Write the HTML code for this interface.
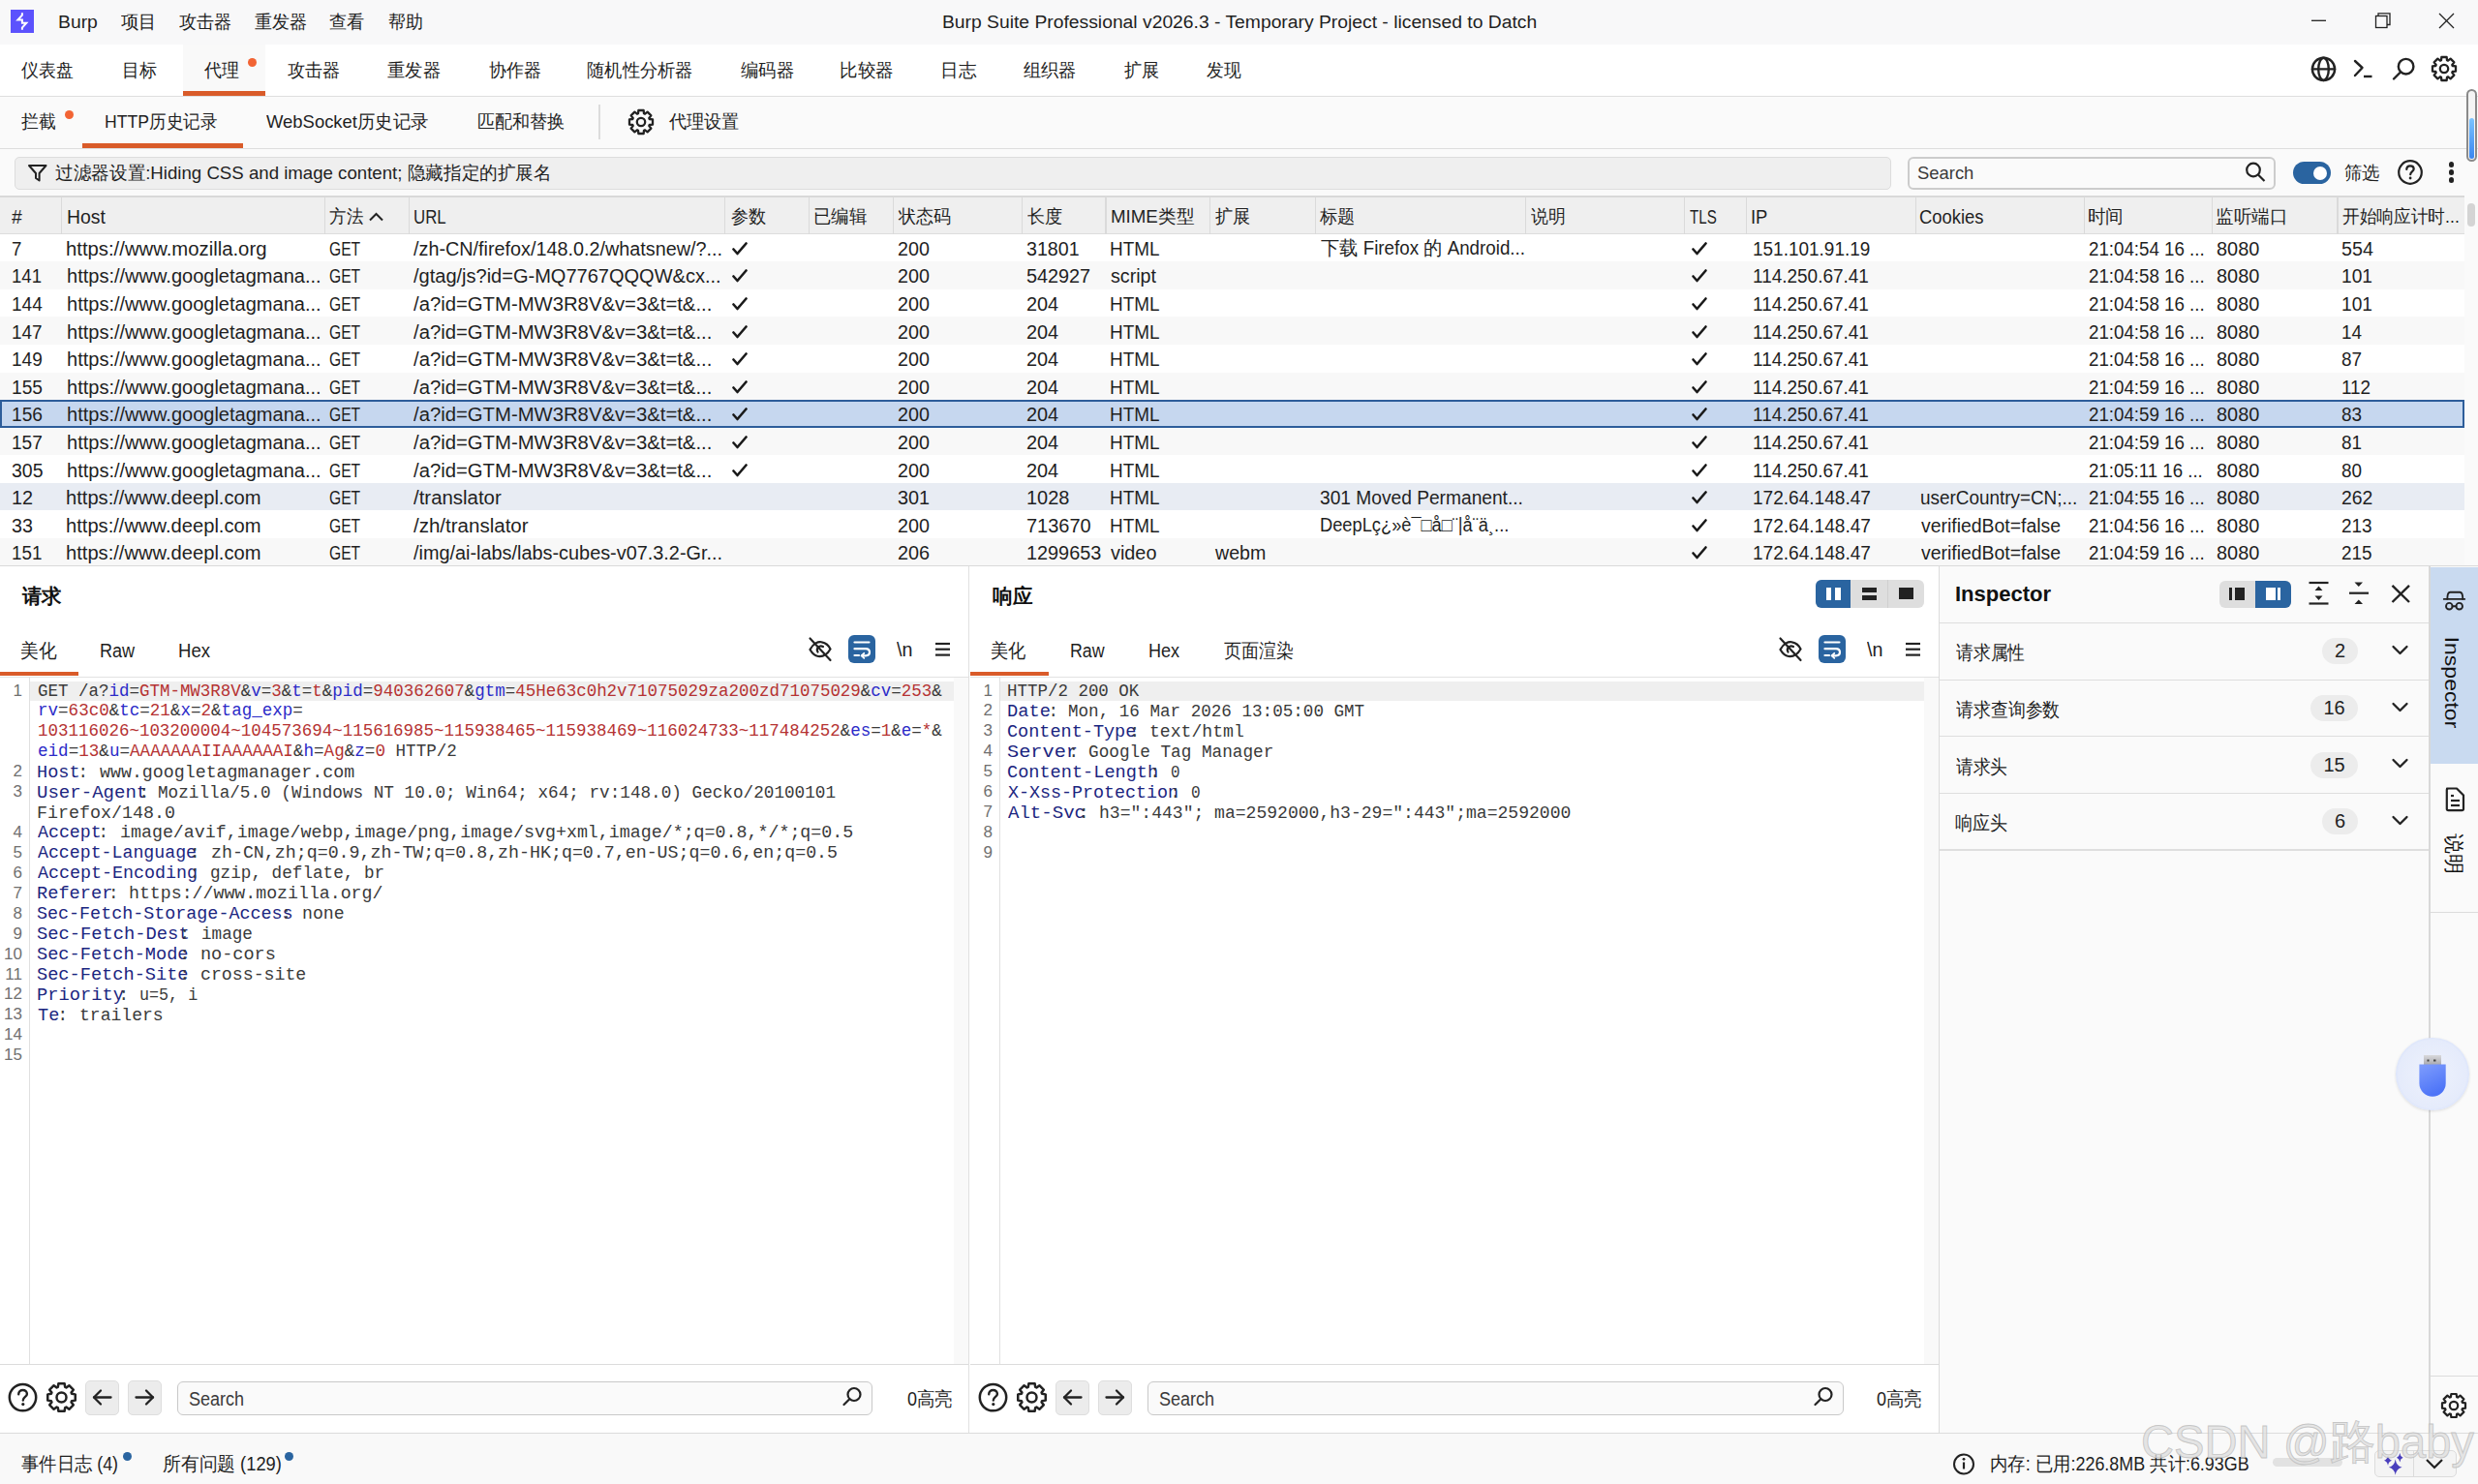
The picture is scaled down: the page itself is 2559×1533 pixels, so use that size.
<!DOCTYPE html>
<html><head><meta charset="utf-8"><style>
html,body{margin:0;padding:0;}
body{width:2559px;height:1533px;position:relative;overflow:hidden;background:#ffffff;font-family:'Liberation Sans',sans-serif;}
</style></head><body>
<div style="position:absolute;left:0px;top:0px;width:2559px;height:46px;background:#f8f8f9"></div>
<svg style="position:absolute;left:11px;top:10px;" width="24" height="24" viewBox="0 0 24 24"><rect width="24" height="24" fill="#5c52fd"/><polyline points="11.9,3.2 11.9,5.6 7.4,10.6 11.9,10.6 11.9,13.7 16.3,13.7 11.9,18.6 11.9,20.7" fill="none" stroke="#fff" stroke-width="2" stroke-linejoin="miter"/></svg>
<div style="position:absolute;left:59.58px;top:8.00px;height:30px;line-height:30px;font-size:19px;color:#1f1f1f;font-weight:normal;font-family:'Liberation Sans',sans-serif;white-space:pre;transform-origin:0 50%;transform:scaleX(1.0179);">Burp</div>
<div style="position:absolute;left:124.50px;top:8.00px;height:30px;line-height:30px;font-size:19px;color:#1f1f1f;font-weight:normal;font-family:'Liberation Sans',sans-serif;white-space:pre;transform-origin:0 50%;transform:scaleX(0.9686);">项目</div>
<div style="position:absolute;left:184.60px;top:8.00px;height:30px;line-height:30px;font-size:19px;color:#1f1f1f;font-weight:normal;font-family:'Liberation Sans',sans-serif;white-space:pre;transform-origin:0 50%;transform:scaleX(0.9518);">攻击器</div>
<div style="position:absolute;left:262.50px;top:8.00px;height:30px;line-height:30px;font-size:19px;color:#1f1f1f;font-weight:normal;font-family:'Liberation Sans',sans-serif;white-space:pre;transform-origin:0 50%;transform:scaleX(0.9500);">重发器</div>
<div style="position:absolute;left:340.30px;top:8.00px;height:30px;line-height:30px;font-size:19px;color:#1f1f1f;font-weight:normal;font-family:'Liberation Sans',sans-serif;white-space:pre;transform-origin:0 50%;transform:scaleX(0.9595);">查看</div>
<div style="position:absolute;left:400.60px;top:8.00px;height:30px;line-height:30px;font-size:19px;color:#1f1f1f;font-weight:normal;font-family:'Liberation Sans',sans-serif;white-space:pre;transform-origin:0 50%;transform:scaleX(0.9432);">帮助</div>
<div style="position:absolute;left:972.59px;top:8.00px;height:30px;line-height:30px;font-size:19.2px;color:#1f1f1f;font-weight:normal;font-family:'Liberation Sans',sans-serif;white-space:pre;transform-origin:0 50%;transform:scaleX(1.0056);">Burp Suite Professional v2026.3 - Temporary Project - licensed to Datch</div>
<svg style="position:absolute;left:2380px;top:5px;" width="170" height="36" viewBox="0 0 170 36"><g stroke="#222" stroke-width="1.3" fill="none"><line x1="7" y1="16.3" x2="22" y2="16.3"/><rect x="73.5" y="11.5" width="11.5" height="12"/><path d="M76 11.5 V8.8 H88 V20.5 H85"/><line x1="139" y1="9" x2="154" y2="24"/><line x1="154" y1="9" x2="139" y2="24"/></g></svg>
<div style="position:absolute;left:0px;top:46px;width:2559px;height:53px;background:#ffffff"></div>
<div style="position:absolute;left:0px;top:99px;width:2559px;height:1px;background:#dedede"></div>
<div style="position:absolute;left:188.5px;top:46px;width:85.2px;height:53px;background:#f9f9f9"></div>
<div style="position:absolute;left:188.5px;top:94px;width:85.2px;height:4.5px;background:#d95b29"></div>
<div style="position:absolute;left:256px;top:59.5px;width:9px;height:9px;border-radius:50%;background:#f26434"></div>
<div style="position:absolute;left:22.30px;top:57.50px;height:30px;line-height:30px;font-size:19px;color:#1f1f1f;font-weight:normal;font-family:'Liberation Sans',sans-serif;white-space:pre;transform-origin:0 50%;transform:scaleX(0.9404);">仪表盘</div>
<div style="position:absolute;left:125.60px;top:57.50px;height:30px;line-height:30px;font-size:19px;color:#1f1f1f;font-weight:normal;font-family:'Liberation Sans',sans-serif;white-space:pre;transform-origin:0 50%;transform:scaleX(0.9500);">目标</div>
<div style="position:absolute;left:211.10px;top:57.50px;height:30px;line-height:30px;font-size:19px;color:#1f1f1f;font-weight:normal;font-family:'Liberation Sans',sans-serif;white-space:pre;transform-origin:0 50%;transform:scaleX(0.9447);">代理</div>
<div style="position:absolute;left:297.30px;top:57.50px;height:30px;line-height:30px;font-size:19px;color:#1f1f1f;font-weight:normal;font-family:'Liberation Sans',sans-serif;white-space:pre;transform-origin:0 50%;transform:scaleX(0.9518);">攻击器</div>
<div style="position:absolute;left:400.00px;top:57.50px;height:30px;line-height:30px;font-size:19px;color:#1f1f1f;font-weight:normal;font-family:'Liberation Sans',sans-serif;white-space:pre;transform-origin:0 50%;transform:scaleX(0.9625);">重发器</div>
<div style="position:absolute;left:504.80px;top:57.50px;height:30px;line-height:30px;font-size:19px;color:#1f1f1f;font-weight:normal;font-family:'Liberation Sans',sans-serif;white-space:pre;transform-origin:0 50%;transform:scaleX(0.9464);">协作器</div>
<div style="position:absolute;left:606.44px;top:57.50px;height:30px;line-height:30px;font-size:19px;color:#1f1f1f;font-weight:normal;font-family:'Liberation Sans',sans-serif;white-space:pre;transform-origin:0 50%;transform:scaleX(0.9607);">随机性分析器</div>
<div style="position:absolute;left:765.20px;top:57.50px;height:30px;line-height:30px;font-size:19px;color:#1f1f1f;font-weight:normal;font-family:'Liberation Sans',sans-serif;white-space:pre;transform-origin:0 50%;transform:scaleX(0.9643);">编码器</div>
<div style="position:absolute;left:867.23px;top:57.50px;height:30px;line-height:30px;font-size:19px;color:#1f1f1f;font-weight:normal;font-family:'Liberation Sans',sans-serif;white-space:pre;transform-origin:0 50%;transform:scaleX(0.9745);">比较器</div>
<div style="position:absolute;left:970.78px;top:57.50px;height:30px;line-height:30px;font-size:19px;color:#1f1f1f;font-weight:normal;font-family:'Liberation Sans',sans-serif;white-space:pre;transform-origin:0 50%;transform:scaleX(0.9743);">日志</div>
<div style="position:absolute;left:1057.40px;top:57.50px;height:30px;line-height:30px;font-size:19px;color:#1f1f1f;font-weight:normal;font-family:'Liberation Sans',sans-serif;white-space:pre;transform-origin:0 50%;transform:scaleX(0.9571);">组织器</div>
<div style="position:absolute;left:1161.00px;top:57.50px;height:30px;line-height:30px;font-size:19px;color:#1f1f1f;font-weight:normal;font-family:'Liberation Sans',sans-serif;white-space:pre;transform-origin:0 50%;transform:scaleX(0.9568);">扩展</div>
<div style="position:absolute;left:1246.00px;top:57.50px;height:30px;line-height:30px;font-size:19px;color:#1f1f1f;font-weight:normal;font-family:'Liberation Sans',sans-serif;white-space:pre;transform-origin:0 50%;transform:scaleX(0.9342);">发现</div>
<svg style="position:absolute;left:2380px;top:52px;" width="160" height="40" viewBox="0 0 160 40"><g stroke="#222" stroke-width="2.4" fill="none" stroke-linecap="round"><circle cx="19.5" cy="19.4" r="11.6"/><ellipse cx="19.5" cy="19.4" rx="5.3" ry="11.6"/><line x1="8" y1="19.4" x2="31" y2="19.4"/><polyline points="52,11 59.5,18 52,26" stroke-linecap="round" stroke-linejoin="round"/><line x1="61" y1="27" x2="69.5" y2="27" stroke-linecap="butt"/><circle cx="104.6" cy="16.7" r="7.8"/><line x1="99" y1="22.5" x2="92" y2="29.5"/></g></svg>
<svg style="position:absolute;left:2508.7px;top:56.4px;" width="30" height="30" viewBox="0 0 30 30"><path d="M23.69,11.99 L27.01,12.36 L27.01,17.64 L23.69,18.01 L23.28,19.01 L25.36,21.63 L21.63,25.36 L19.01,23.28 L18.01,23.69 L17.64,27.01 L12.36,27.01 L11.99,23.69 L10.99,23.28 L8.37,25.36 L4.64,21.63 L6.72,19.01 L6.31,18.01 L2.99,17.64 L2.99,12.36 L6.31,11.99 L6.72,10.99 L4.64,8.37 L8.37,4.64 L10.99,6.72 L11.99,6.31 L12.36,2.99 L17.64,2.99 L18.01,6.31 L19.01,6.72 L21.63,4.64 L25.36,8.37 L23.28,10.99Z" fill="none" stroke="#222" stroke-width="2.3" stroke-linejoin="round"/><circle cx="15.0" cy="15.0" r="4.2" fill="none" stroke="#222" stroke-width="2.3"/></svg>
<div style="position:absolute;left:0px;top:100px;width:2559px;height:53px;background:#fafafa"></div>
<div style="position:absolute;left:0px;top:153px;width:2559px;height:1px;background:#dedede"></div>
<div style="position:absolute;left:85px;top:148px;width:166px;height:4.5px;background:#d95b29"></div>
<div style="position:absolute;left:67px;top:113.5px;width:9px;height:9px;border-radius:50%;background:#f26434"></div>
<div style="position:absolute;left:22.30px;top:111.00px;height:30px;line-height:30px;font-size:19px;color:#1f1f1f;font-weight:normal;font-family:'Liberation Sans',sans-serif;white-space:pre;transform-origin:0 50%;transform:scaleX(0.9316);">拦截</div>
<div style="position:absolute;left:108.07px;top:111.00px;height:30px;line-height:30px;font-size:19px;color:#1f1f1f;font-weight:normal;font-family:'Liberation Sans',sans-serif;white-space:pre;transform-origin:0 50%;transform:scaleX(0.9256);">HTTP历史记录</div>
<div style="position:absolute;left:274.70px;top:111.00px;height:30px;line-height:30px;font-size:19px;color:#1f1f1f;font-weight:normal;font-family:'Liberation Sans',sans-serif;white-space:pre;transform-origin:0 50%;transform:scaleX(0.9705);">WebSocket历史记录</div>
<div style="position:absolute;left:493.05px;top:111.00px;height:30px;line-height:30px;font-size:19px;color:#1f1f1f;font-weight:normal;font-family:'Liberation Sans',sans-serif;white-space:pre;transform-origin:0 50%;transform:scaleX(0.9538);">匹配和替换</div>
<div style="position:absolute;left:690.90px;top:111.00px;height:30px;line-height:30px;font-size:19px;color:#1f1f1f;font-weight:normal;font-family:'Liberation Sans',sans-serif;white-space:pre;transform-origin:0 50%;transform:scaleX(0.9547);">代理设置</div>
<div style="position:absolute;left:618px;top:108px;width:1.5px;height:36px;background:#dcdcdc"></div>
<svg style="position:absolute;left:647.0px;top:111.0px;" width="30" height="30" viewBox="0 0 30 30"><path d="M23.69,11.99 L27.01,12.36 L27.01,17.64 L23.69,18.01 L23.28,19.01 L25.36,21.63 L21.63,25.36 L19.01,23.28 L18.01,23.69 L17.64,27.01 L12.36,27.01 L11.99,23.69 L10.99,23.28 L8.37,25.36 L4.64,21.63 L6.72,19.01 L6.31,18.01 L2.99,17.64 L2.99,12.36 L6.31,11.99 L6.72,10.99 L4.64,8.37 L8.37,4.64 L10.99,6.72 L11.99,6.31 L12.36,2.99 L17.64,2.99 L18.01,6.31 L19.01,6.72 L21.63,4.64 L25.36,8.37 L23.28,10.99Z" fill="none" stroke="#222" stroke-width="2.3" stroke-linejoin="round"/><circle cx="15.0" cy="15.0" r="4.2" fill="none" stroke="#222" stroke-width="2.3"/></svg>
<div style="position:absolute;left:0px;top:154px;width:2559px;height:49px;background:#fafafa"></div>
<div style="position:absolute;left:14.5px;top:161.5px;width:1938.7px;height:34px;box-sizing:border-box;border:1.3px solid #dcdcdc;border-radius:5px;background:#efefef"></div>
<svg style="position:absolute;left:28px;top:169px;" width="22" height="19" viewBox="0 0 22 19"><path d="M2 2 H19.5 L12.6 10 V17.5 L9 15 V10 Z" fill="none" stroke="#222" stroke-width="2" stroke-linejoin="round"/></svg>
<div style="position:absolute;left:56.80px;top:163.50px;height:30px;line-height:30px;font-size:19px;color:#1f1f1f;font-weight:normal;font-family:'Liberation Sans',sans-serif;white-space:pre;transform-origin:0 50%;transform:scaleX(0.9810);">过滤器设置:Hiding CSS and image content; 隐藏指定的扩展名</div>
<div style="position:absolute;left:1969.5px;top:161.5px;width:380px;height:34px;box-sizing:border-box;border:2px solid #cccccc;border-radius:6px;background:#fafafa"></div>
<div style="position:absolute;left:1980.43px;top:163.50px;height:30px;line-height:30px;font-size:19px;color:#3a3a3a;font-weight:normal;font-family:'Liberation Sans',sans-serif;white-space:pre;transform-origin:0 50%;transform:scaleX(0.9690);">Search</div>
<svg style="position:absolute;left:2316px;top:164px;" width="28" height="30" viewBox="0 0 28 30"><g stroke="#222" stroke-width="2.2" fill="none"><circle cx="11" cy="11.5" r="6.8"/><line x1="16" y1="16.5" x2="22.5" y2="23"/></g></svg>
<div style="position:absolute;left:2368px;top:167px;width:39px;height:23px;border-radius:12px;background:#2a64a0"></div>
<div style="position:absolute;left:2389px;top:171.5px;width:14px;height:14px;border-radius:50%;background:#fff"></div>
<div style="position:absolute;left:2421.04px;top:163.50px;height:30px;line-height:30px;font-size:19px;color:#1f1f1f;font-weight:normal;font-family:'Liberation Sans',sans-serif;white-space:pre;transform-origin:0 50%;transform:scaleX(0.9649);">筛选</div>
<svg style="position:absolute;left:2475px;top:164px;" width="28" height="28" viewBox="0 0 28 28"><circle cx="14" cy="14" r="11.8" fill="none" stroke="#222" stroke-width="2.2"/><path d="M10.3 11 C10.3 8.5 12 7.3 14 7.3 C16.2 7.3 17.7 8.7 17.7 10.6 C17.7 13 14.2 13.3 14.2 16.2" fill="none" stroke="#222" stroke-width="2.2" stroke-linecap="round"/><circle cx="14.1" cy="20" r="1.4" fill="#222"/></svg>
<div style="position:absolute;left:2529px;top:167.4px;width:5.2px;height:5.2px;border-radius:50%;background:#222"></div>
<div style="position:absolute;left:2529px;top:175.4px;width:5.2px;height:5.2px;border-radius:50%;background:#222"></div>
<div style="position:absolute;left:2529px;top:183.4px;width:5.2px;height:5.2px;border-radius:50%;background:#222"></div>
<div style="position:absolute;left:2547px;top:92px;width:11px;height:75px;box-sizing:border-box;border:2px solid #8a8a8a;border-radius:6px;background:#f4f4f4"></div>
<div style="position:absolute;left:2550px;top:122px;width:5px;height:42px;border-radius:3px;background:linear-gradient(#7cc4ff,#3a86f0)"></div>
<div style="position:absolute;left:0px;top:203.4px;width:2545px;height:38.19999999999999px;background:#efefef"></div>
<div style="position:absolute;left:0px;top:202.4px;width:2545px;height:1.3px;background:#d9d9d9"></div>
<div style="position:absolute;left:0px;top:240.6px;width:2545px;height:1.2px;background:#dddddd"></div>
<div style="position:absolute;left:63.3px;top:203.4px;width:1.2px;height:38.19999999999999px;background:#dadada"></div>
<div style="position:absolute;left:334.5px;top:203.4px;width:1.2px;height:38.19999999999999px;background:#dadada"></div>
<div style="position:absolute;left:421.5px;top:203.4px;width:1.2px;height:38.19999999999999px;background:#dadada"></div>
<div style="position:absolute;left:748.3px;top:203.4px;width:1.2px;height:38.19999999999999px;background:#dadada"></div>
<div style="position:absolute;left:835.3px;top:203.4px;width:1.2px;height:38.19999999999999px;background:#dadada"></div>
<div style="position:absolute;left:922.3px;top:203.4px;width:1.2px;height:38.19999999999999px;background:#dadada"></div>
<div style="position:absolute;left:1054.5px;top:203.4px;width:1.2px;height:38.19999999999999px;background:#dadada"></div>
<div style="position:absolute;left:1141.4px;top:203.4px;width:1.2px;height:38.19999999999999px;background:#dadada"></div>
<div style="position:absolute;left:1249.2px;top:203.4px;width:1.2px;height:38.19999999999999px;background:#dadada"></div>
<div style="position:absolute;left:1357.8px;top:203.4px;width:1.2px;height:38.19999999999999px;background:#dadada"></div>
<div style="position:absolute;left:1575.1px;top:203.4px;width:1.2px;height:38.19999999999999px;background:#dadada"></div>
<div style="position:absolute;left:1738.6px;top:203.4px;width:1.2px;height:38.19999999999999px;background:#dadada"></div>
<div style="position:absolute;left:1803.2px;top:203.4px;width:1.2px;height:38.19999999999999px;background:#dadada"></div>
<div style="position:absolute;left:1977.5px;top:203.4px;width:1.2px;height:38.19999999999999px;background:#dadada"></div>
<div style="position:absolute;left:2151.6px;top:203.4px;width:1.2px;height:38.19999999999999px;background:#dadada"></div>
<div style="position:absolute;left:2283.8px;top:203.4px;width:1.2px;height:38.19999999999999px;background:#dadada"></div>
<div style="position:absolute;left:2413.4px;top:203.4px;width:1.2px;height:38.19999999999999px;background:#dadada"></div>
<div style="position:absolute;left:12.10px;top:208.00px;height:32px;line-height:32px;font-size:20px;color:#1f1f1f;font-weight:normal;font-family:'Liberation Sans',sans-serif;white-space:pre;transform-origin:0 50%;transform:scaleX(0.9636);">#</div>
<div style="position:absolute;left:68.73px;top:208.00px;height:32px;line-height:32px;font-size:20px;color:#1f1f1f;font-weight:normal;font-family:'Liberation Sans',sans-serif;white-space:pre;transform-origin:0 50%;transform:scaleX(0.9700);">Host</div>
<div style="position:absolute;left:340.00px;top:209.00px;height:30px;line-height:30px;font-size:19px;color:#1f1f1f;font-weight:normal;font-family:'Liberation Sans',sans-serif;white-space:pre;transform-origin:0 50%;transform:scaleX(0.9211);">方法</div>
<div style="position:absolute;left:426.56px;top:208.00px;height:32px;line-height:32px;font-size:20px;color:#1f1f1f;font-weight:normal;font-family:'Liberation Sans',sans-serif;white-space:pre;transform-origin:0 50%;transform:scaleX(0.8410);">URL</div>
<div style="position:absolute;left:754.50px;top:209.00px;height:30px;line-height:30px;font-size:19px;color:#1f1f1f;font-weight:normal;font-family:'Liberation Sans',sans-serif;white-space:pre;transform-origin:0 50%;transform:scaleX(0.9541);">参数</div>
<div style="position:absolute;left:839.56px;top:209.00px;height:30px;line-height:30px;font-size:19px;color:#1f1f1f;font-weight:normal;font-family:'Liberation Sans',sans-serif;white-space:pre;transform-origin:0 50%;transform:scaleX(0.9709);">已编辑</div>
<div style="position:absolute;left:928.20px;top:209.00px;height:30px;line-height:30px;font-size:19px;color:#1f1f1f;font-weight:normal;font-family:'Liberation Sans',sans-serif;white-space:pre;transform-origin:0 50%;transform:scaleX(0.9500);">状态码</div>
<div style="position:absolute;left:1060.60px;top:209.00px;height:30px;line-height:30px;font-size:19px;color:#1f1f1f;font-weight:normal;font-family:'Liberation Sans',sans-serif;white-space:pre;transform-origin:0 50%;transform:scaleX(0.9568);">长度</div>
<div style="position:absolute;left:1146.52px;top:209.00px;height:30px;line-height:30px;font-size:19px;color:#1f1f1f;font-weight:normal;font-family:'Liberation Sans',sans-serif;white-space:pre;transform-origin:0 50%;transform:scaleX(0.9839);">MIME类型</div>
<div style="position:absolute;left:1255.20px;top:209.00px;height:30px;line-height:30px;font-size:19px;color:#1f1f1f;font-weight:normal;font-family:'Liberation Sans',sans-serif;white-space:pre;transform-origin:0 50%;transform:scaleX(0.9568);">扩展</div>
<div style="position:absolute;left:1363.30px;top:209.00px;height:30px;line-height:30px;font-size:19px;color:#1f1f1f;font-weight:normal;font-family:'Liberation Sans',sans-serif;white-space:pre;transform-origin:0 50%;transform:scaleX(0.9568);">标题</div>
<div style="position:absolute;left:1581.20px;top:209.00px;height:30px;line-height:30px;font-size:19px;color:#1f1f1f;font-weight:normal;font-family:'Liberation Sans',sans-serif;white-space:pre;transform-origin:0 50%;transform:scaleX(0.9405);">说明</div>
<div style="position:absolute;left:1744.60px;top:208.00px;height:32px;line-height:32px;font-size:20px;color:#1f1f1f;font-weight:normal;font-family:'Liberation Sans',sans-serif;white-space:pre;transform-origin:0 50%;transform:scaleX(0.7556);">TLS</div>
<div style="position:absolute;left:1807.86px;top:208.00px;height:32px;line-height:32px;font-size:20px;color:#1f1f1f;font-weight:normal;font-family:'Liberation Sans',sans-serif;white-space:pre;transform-origin:0 50%;transform:scaleX(0.9188);">IP</div>
<div style="position:absolute;left:1982.48px;top:208.00px;height:32px;line-height:32px;font-size:20px;color:#1f1f1f;font-weight:normal;font-family:'Liberation Sans',sans-serif;white-space:pre;transform-origin:0 50%;transform:scaleX(0.9197);">Cookies</div>
<div style="position:absolute;left:2156.43px;top:209.00px;height:30px;line-height:30px;font-size:19px;color:#1f1f1f;font-weight:normal;font-family:'Liberation Sans',sans-serif;white-space:pre;transform-origin:0 50%;transform:scaleX(0.9722);">时间</div>
<div style="position:absolute;left:2288.32px;top:209.00px;height:30px;line-height:30px;font-size:19px;color:#1f1f1f;font-weight:normal;font-family:'Liberation Sans',sans-serif;white-space:pre;transform-origin:0 50%;transform:scaleX(0.9806);">监听端口</div>
<div style="position:absolute;left:2419.30px;top:209.00px;height:30px;line-height:30px;font-size:19px;color:#1f1f1f;font-weight:normal;font-family:'Liberation Sans',sans-serif;white-space:pre;transform-origin:0 50%;transform:scaleX(0.9305);">开始响应计时...</div>
<svg style="position:absolute;left:380px;top:218px;" width="18" height="12" viewBox="0 0 18 12"><polyline points="2,9.5 8.5,3 15,9.5" fill="none" stroke="#222" stroke-width="2"/></svg>
<div style="position:absolute;left:0px;top:241.6px;width:2545px;height:29.08px;background:#ffffff"></div>
<div style="position:absolute;left:11.77px;top:240.89px;height:32px;line-height:32px;font-size:20px;color:#1f1f1f;font-weight:normal;font-family:'Liberation Sans',sans-serif;white-space:pre;transform-origin:0 50%;transform:scaleX(0.9300);">7</div>
<div style="position:absolute;left:68.49px;top:240.89px;height:32px;line-height:32px;font-size:20px;color:#1f1f1f;font-weight:normal;font-family:'Liberation Sans',sans-serif;white-space:pre;transform-origin:0 50%;transform:scaleX(1.0143);">https://www.mozilla.org</div>
<div style="position:absolute;left:339.92px;top:240.89px;height:32px;line-height:32px;font-size:20px;color:#1f1f1f;font-weight:normal;font-family:'Liberation Sans',sans-serif;white-space:pre;transform-origin:0 50%;transform:scaleX(0.7825);">GET</div>
<div style="position:absolute;left:427.00px;top:240.89px;height:32px;line-height:32px;font-size:20px;color:#1f1f1f;font-weight:normal;font-family:'Liberation Sans',sans-serif;white-space:pre;transform-origin:0 50%;transform:scaleX(0.9894);">/zh-CN/firefox/148.0.2/whatsnew/?...</div>
<svg style="position:absolute;left:755.3px;top:248.89px;" width="20" height="16" viewBox="0 0 20 16"><polyline points="2.5,8.5 6.5,13 15.5,2.5" fill="none" stroke="#1a1a1a" stroke-width="2.6" stroke-linecap="round" stroke-linejoin="round"/></svg>
<div style="position:absolute;left:927.32px;top:240.89px;height:32px;line-height:32px;font-size:20px;color:#1f1f1f;font-weight:normal;font-family:'Liberation Sans',sans-serif;white-space:pre;transform-origin:0 50%;transform:scaleX(0.9844);">200</div>
<div style="position:absolute;left:1059.52px;top:240.89px;height:32px;line-height:32px;font-size:20px;color:#1f1f1f;font-weight:normal;font-family:'Liberation Sans',sans-serif;white-space:pre;transform-origin:0 50%;transform:scaleX(0.9815);">31801</div>
<div style="position:absolute;left:1146.45px;top:240.89px;height:32px;line-height:32px;font-size:20px;color:#1f1f1f;font-weight:normal;font-family:'Liberation Sans',sans-serif;white-space:pre;transform-origin:0 50%;transform:scaleX(0.9472);">HTML</div>
<div style="position:absolute;left:1363.80px;top:241.39px;height:31px;line-height:31px;font-size:19.5px;color:#1f1f1f;font-weight:normal;font-family:'Liberation Sans',sans-serif;white-space:pre;transform-origin:0 50%;transform:scaleX(0.9619);">下载 Firefox 的 Android...</div>
<svg style="position:absolute;left:1745.6px;top:248.89px;" width="20" height="16" viewBox="0 0 20 16"><polyline points="2.5,8.5 6.5,13 15.5,2.5" fill="none" stroke="#1a1a1a" stroke-width="2.6" stroke-linecap="round" stroke-linejoin="round"/></svg>
<div style="position:absolute;left:1809.75px;top:240.89px;height:32px;line-height:32px;font-size:20px;color:#1f1f1f;font-weight:normal;font-family:'Liberation Sans',sans-serif;white-space:pre;transform-origin:0 50%;transform:scaleX(0.9484);">151.101.91.19</div>
<div style="position:absolute;left:2156.66px;top:240.89px;height:32px;line-height:32px;font-size:20px;color:#1f1f1f;font-weight:normal;font-family:'Liberation Sans',sans-serif;white-space:pre;transform-origin:0 50%;transform:scaleX(0.9360);">21:04:54 16 ...</div>
<div style="position:absolute;left:2288.80px;top:240.89px;height:32px;line-height:32px;font-size:20px;color:#1f1f1f;font-weight:normal;font-family:'Liberation Sans',sans-serif;white-space:pre;transform-origin:0 50%;transform:scaleX(0.9953);">8080</div>
<div style="position:absolute;left:2418.42px;top:240.89px;height:32px;line-height:32px;font-size:20px;color:#1f1f1f;font-weight:normal;font-family:'Liberation Sans',sans-serif;white-space:pre;transform-origin:0 50%;transform:scaleX(0.9844);">554</div>
<div style="position:absolute;left:0px;top:270.18px;width:2545px;height:29.08px;background:#f8f8f8"></div>
<div style="position:absolute;left:11.77px;top:269.47px;height:32px;line-height:32px;font-size:20px;color:#1f1f1f;font-weight:normal;font-family:'Liberation Sans',sans-serif;white-space:pre;transform-origin:0 50%;transform:scaleX(0.9281);">141</div>
<div style="position:absolute;left:68.50px;top:269.47px;height:32px;line-height:32px;font-size:20px;color:#1f1f1f;font-weight:normal;font-family:'Liberation Sans',sans-serif;white-space:pre;transform-origin:0 50%;transform:scaleX(1.0008);">https://www.googletagmana...</div>
<div style="position:absolute;left:339.92px;top:269.47px;height:32px;line-height:32px;font-size:20px;color:#1f1f1f;font-weight:normal;font-family:'Liberation Sans',sans-serif;white-space:pre;transform-origin:0 50%;transform:scaleX(0.7825);">GET</div>
<div style="position:absolute;left:427.00px;top:269.47px;height:32px;line-height:32px;font-size:20px;color:#1f1f1f;font-weight:normal;font-family:'Liberation Sans',sans-serif;white-space:pre;transform-origin:0 50%;transform:scaleX(1.0009);">/gtag/js?id=G-MQ7767QQQW&amp;cx...</div>
<svg style="position:absolute;left:755.3px;top:277.47px;" width="20" height="16" viewBox="0 0 20 16"><polyline points="2.5,8.5 6.5,13 15.5,2.5" fill="none" stroke="#1a1a1a" stroke-width="2.6" stroke-linecap="round" stroke-linejoin="round"/></svg>
<div style="position:absolute;left:927.32px;top:269.47px;height:32px;line-height:32px;font-size:20px;color:#1f1f1f;font-weight:normal;font-family:'Liberation Sans',sans-serif;white-space:pre;transform-origin:0 50%;transform:scaleX(0.9844);">200</div>
<div style="position:absolute;left:1059.51px;top:269.47px;height:32px;line-height:32px;font-size:20px;color:#1f1f1f;font-weight:normal;font-family:'Liberation Sans',sans-serif;white-space:pre;transform-origin:0 50%;transform:scaleX(0.9908);">542927</div>
<div style="position:absolute;left:1147.40px;top:269.47px;height:32px;line-height:32px;font-size:20px;color:#1f1f1f;font-weight:normal;font-family:'Liberation Sans',sans-serif;white-space:pre;transform-origin:0 50%;transform:scaleX(0.9833);">script</div>
<svg style="position:absolute;left:1745.6px;top:277.47px;" width="20" height="16" viewBox="0 0 20 16"><polyline points="2.5,8.5 6.5,13 15.5,2.5" fill="none" stroke="#1a1a1a" stroke-width="2.6" stroke-linecap="round" stroke-linejoin="round"/></svg>
<div style="position:absolute;left:1809.75px;top:269.47px;height:32px;line-height:32px;font-size:20px;color:#1f1f1f;font-weight:normal;font-family:'Liberation Sans',sans-serif;white-space:pre;transform-origin:0 50%;transform:scaleX(0.9480);">114.250.67.41</div>
<div style="position:absolute;left:2156.66px;top:269.47px;height:32px;line-height:32px;font-size:20px;color:#1f1f1f;font-weight:normal;font-family:'Liberation Sans',sans-serif;white-space:pre;transform-origin:0 50%;transform:scaleX(0.9360);">21:04:58 16 ...</div>
<div style="position:absolute;left:2288.80px;top:269.47px;height:32px;line-height:32px;font-size:20px;color:#1f1f1f;font-weight:normal;font-family:'Liberation Sans',sans-serif;white-space:pre;transform-origin:0 50%;transform:scaleX(0.9953);">8080</div>
<div style="position:absolute;left:2418.44px;top:269.47px;height:32px;line-height:32px;font-size:20px;color:#1f1f1f;font-weight:normal;font-family:'Liberation Sans',sans-serif;white-space:pre;transform-origin:0 50%;transform:scaleX(0.9594);">101</div>
<div style="position:absolute;left:0px;top:298.76px;width:2545px;height:29.08px;background:#ffffff"></div>
<div style="position:absolute;left:11.75px;top:298.05px;height:32px;line-height:32px;font-size:20px;color:#1f1f1f;font-weight:normal;font-family:'Liberation Sans',sans-serif;white-space:pre;transform-origin:0 50%;transform:scaleX(0.9531);">144</div>
<div style="position:absolute;left:68.50px;top:298.05px;height:32px;line-height:32px;font-size:20px;color:#1f1f1f;font-weight:normal;font-family:'Liberation Sans',sans-serif;white-space:pre;transform-origin:0 50%;transform:scaleX(1.0008);">https://www.googletagmana...</div>
<div style="position:absolute;left:339.92px;top:298.05px;height:32px;line-height:32px;font-size:20px;color:#1f1f1f;font-weight:normal;font-family:'Liberation Sans',sans-serif;white-space:pre;transform-origin:0 50%;transform:scaleX(0.7825);">GET</div>
<div style="position:absolute;left:427.00px;top:298.05px;height:32px;line-height:32px;font-size:20px;color:#1f1f1f;font-weight:normal;font-family:'Liberation Sans',sans-serif;white-space:pre;transform-origin:0 50%;transform:scaleX(1.0142);">/a?id=GTM-MW3R8V&amp;v=3&amp;t=t&amp;...</div>
<svg style="position:absolute;left:755.3px;top:306.05px;" width="20" height="16" viewBox="0 0 20 16"><polyline points="2.5,8.5 6.5,13 15.5,2.5" fill="none" stroke="#1a1a1a" stroke-width="2.6" stroke-linecap="round" stroke-linejoin="round"/></svg>
<div style="position:absolute;left:927.32px;top:298.05px;height:32px;line-height:32px;font-size:20px;color:#1f1f1f;font-weight:normal;font-family:'Liberation Sans',sans-serif;white-space:pre;transform-origin:0 50%;transform:scaleX(0.9844);">200</div>
<div style="position:absolute;left:1059.51px;top:298.05px;height:32px;line-height:32px;font-size:20px;color:#1f1f1f;font-weight:normal;font-family:'Liberation Sans',sans-serif;white-space:pre;transform-origin:0 50%;transform:scaleX(0.9937);">204</div>
<div style="position:absolute;left:1146.45px;top:298.05px;height:32px;line-height:32px;font-size:20px;color:#1f1f1f;font-weight:normal;font-family:'Liberation Sans',sans-serif;white-space:pre;transform-origin:0 50%;transform:scaleX(0.9472);">HTML</div>
<svg style="position:absolute;left:1745.6px;top:306.05px;" width="20" height="16" viewBox="0 0 20 16"><polyline points="2.5,8.5 6.5,13 15.5,2.5" fill="none" stroke="#1a1a1a" stroke-width="2.6" stroke-linecap="round" stroke-linejoin="round"/></svg>
<div style="position:absolute;left:1809.75px;top:298.05px;height:32px;line-height:32px;font-size:20px;color:#1f1f1f;font-weight:normal;font-family:'Liberation Sans',sans-serif;white-space:pre;transform-origin:0 50%;transform:scaleX(0.9480);">114.250.67.41</div>
<div style="position:absolute;left:2156.66px;top:298.05px;height:32px;line-height:32px;font-size:20px;color:#1f1f1f;font-weight:normal;font-family:'Liberation Sans',sans-serif;white-space:pre;transform-origin:0 50%;transform:scaleX(0.9360);">21:04:58 16 ...</div>
<div style="position:absolute;left:2288.80px;top:298.05px;height:32px;line-height:32px;font-size:20px;color:#1f1f1f;font-weight:normal;font-family:'Liberation Sans',sans-serif;white-space:pre;transform-origin:0 50%;transform:scaleX(0.9953);">8080</div>
<div style="position:absolute;left:2418.44px;top:298.05px;height:32px;line-height:32px;font-size:20px;color:#1f1f1f;font-weight:normal;font-family:'Liberation Sans',sans-serif;white-space:pre;transform-origin:0 50%;transform:scaleX(0.9594);">101</div>
<div style="position:absolute;left:0px;top:327.34px;width:2545px;height:29.08px;background:#f8f8f8"></div>
<div style="position:absolute;left:11.76px;top:326.63px;height:32px;line-height:32px;font-size:20px;color:#1f1f1f;font-weight:normal;font-family:'Liberation Sans',sans-serif;white-space:pre;transform-origin:0 50%;transform:scaleX(0.9437);">147</div>
<div style="position:absolute;left:68.50px;top:326.63px;height:32px;line-height:32px;font-size:20px;color:#1f1f1f;font-weight:normal;font-family:'Liberation Sans',sans-serif;white-space:pre;transform-origin:0 50%;transform:scaleX(1.0008);">https://www.googletagmana...</div>
<div style="position:absolute;left:339.92px;top:326.63px;height:32px;line-height:32px;font-size:20px;color:#1f1f1f;font-weight:normal;font-family:'Liberation Sans',sans-serif;white-space:pre;transform-origin:0 50%;transform:scaleX(0.7825);">GET</div>
<div style="position:absolute;left:427.00px;top:326.63px;height:32px;line-height:32px;font-size:20px;color:#1f1f1f;font-weight:normal;font-family:'Liberation Sans',sans-serif;white-space:pre;transform-origin:0 50%;transform:scaleX(1.0142);">/a?id=GTM-MW3R8V&amp;v=3&amp;t=t&amp;...</div>
<svg style="position:absolute;left:755.3px;top:334.63px;" width="20" height="16" viewBox="0 0 20 16"><polyline points="2.5,8.5 6.5,13 15.5,2.5" fill="none" stroke="#1a1a1a" stroke-width="2.6" stroke-linecap="round" stroke-linejoin="round"/></svg>
<div style="position:absolute;left:927.32px;top:326.63px;height:32px;line-height:32px;font-size:20px;color:#1f1f1f;font-weight:normal;font-family:'Liberation Sans',sans-serif;white-space:pre;transform-origin:0 50%;transform:scaleX(0.9844);">200</div>
<div style="position:absolute;left:1059.51px;top:326.63px;height:32px;line-height:32px;font-size:20px;color:#1f1f1f;font-weight:normal;font-family:'Liberation Sans',sans-serif;white-space:pre;transform-origin:0 50%;transform:scaleX(0.9937);">204</div>
<div style="position:absolute;left:1146.45px;top:326.63px;height:32px;line-height:32px;font-size:20px;color:#1f1f1f;font-weight:normal;font-family:'Liberation Sans',sans-serif;white-space:pre;transform-origin:0 50%;transform:scaleX(0.9472);">HTML</div>
<svg style="position:absolute;left:1745.6px;top:334.63px;" width="20" height="16" viewBox="0 0 20 16"><polyline points="2.5,8.5 6.5,13 15.5,2.5" fill="none" stroke="#1a1a1a" stroke-width="2.6" stroke-linecap="round" stroke-linejoin="round"/></svg>
<div style="position:absolute;left:1809.75px;top:326.63px;height:32px;line-height:32px;font-size:20px;color:#1f1f1f;font-weight:normal;font-family:'Liberation Sans',sans-serif;white-space:pre;transform-origin:0 50%;transform:scaleX(0.9480);">114.250.67.41</div>
<div style="position:absolute;left:2156.66px;top:326.63px;height:32px;line-height:32px;font-size:20px;color:#1f1f1f;font-weight:normal;font-family:'Liberation Sans',sans-serif;white-space:pre;transform-origin:0 50%;transform:scaleX(0.9360);">21:04:58 16 ...</div>
<div style="position:absolute;left:2288.80px;top:326.63px;height:32px;line-height:32px;font-size:20px;color:#1f1f1f;font-weight:normal;font-family:'Liberation Sans',sans-serif;white-space:pre;transform-origin:0 50%;transform:scaleX(0.9953);">8080</div>
<div style="position:absolute;left:2418.45px;top:326.63px;height:32px;line-height:32px;font-size:20px;color:#1f1f1f;font-weight:normal;font-family:'Liberation Sans',sans-serif;white-space:pre;transform-origin:0 50%;transform:scaleX(0.9450);">14</div>
<div style="position:absolute;left:0px;top:355.91999999999996px;width:2545px;height:29.08px;background:#ffffff"></div>
<div style="position:absolute;left:11.75px;top:355.21px;height:32px;line-height:32px;font-size:20px;color:#1f1f1f;font-weight:normal;font-family:'Liberation Sans',sans-serif;white-space:pre;transform-origin:0 50%;transform:scaleX(0.9531);">149</div>
<div style="position:absolute;left:68.50px;top:355.21px;height:32px;line-height:32px;font-size:20px;color:#1f1f1f;font-weight:normal;font-family:'Liberation Sans',sans-serif;white-space:pre;transform-origin:0 50%;transform:scaleX(1.0008);">https://www.googletagmana...</div>
<div style="position:absolute;left:339.92px;top:355.21px;height:32px;line-height:32px;font-size:20px;color:#1f1f1f;font-weight:normal;font-family:'Liberation Sans',sans-serif;white-space:pre;transform-origin:0 50%;transform:scaleX(0.7825);">GET</div>
<div style="position:absolute;left:427.00px;top:355.21px;height:32px;line-height:32px;font-size:20px;color:#1f1f1f;font-weight:normal;font-family:'Liberation Sans',sans-serif;white-space:pre;transform-origin:0 50%;transform:scaleX(1.0142);">/a?id=GTM-MW3R8V&amp;v=3&amp;t=t&amp;...</div>
<svg style="position:absolute;left:755.3px;top:363.21px;" width="20" height="16" viewBox="0 0 20 16"><polyline points="2.5,8.5 6.5,13 15.5,2.5" fill="none" stroke="#1a1a1a" stroke-width="2.6" stroke-linecap="round" stroke-linejoin="round"/></svg>
<div style="position:absolute;left:927.32px;top:355.21px;height:32px;line-height:32px;font-size:20px;color:#1f1f1f;font-weight:normal;font-family:'Liberation Sans',sans-serif;white-space:pre;transform-origin:0 50%;transform:scaleX(0.9844);">200</div>
<div style="position:absolute;left:1059.51px;top:355.21px;height:32px;line-height:32px;font-size:20px;color:#1f1f1f;font-weight:normal;font-family:'Liberation Sans',sans-serif;white-space:pre;transform-origin:0 50%;transform:scaleX(0.9937);">204</div>
<div style="position:absolute;left:1146.45px;top:355.21px;height:32px;line-height:32px;font-size:20px;color:#1f1f1f;font-weight:normal;font-family:'Liberation Sans',sans-serif;white-space:pre;transform-origin:0 50%;transform:scaleX(0.9472);">HTML</div>
<svg style="position:absolute;left:1745.6px;top:363.21px;" width="20" height="16" viewBox="0 0 20 16"><polyline points="2.5,8.5 6.5,13 15.5,2.5" fill="none" stroke="#1a1a1a" stroke-width="2.6" stroke-linecap="round" stroke-linejoin="round"/></svg>
<div style="position:absolute;left:1809.75px;top:355.21px;height:32px;line-height:32px;font-size:20px;color:#1f1f1f;font-weight:normal;font-family:'Liberation Sans',sans-serif;white-space:pre;transform-origin:0 50%;transform:scaleX(0.9480);">114.250.67.41</div>
<div style="position:absolute;left:2156.66px;top:355.21px;height:32px;line-height:32px;font-size:20px;color:#1f1f1f;font-weight:normal;font-family:'Liberation Sans',sans-serif;white-space:pre;transform-origin:0 50%;transform:scaleX(0.9360);">21:04:58 16 ...</div>
<div style="position:absolute;left:2288.80px;top:355.21px;height:32px;line-height:32px;font-size:20px;color:#1f1f1f;font-weight:normal;font-family:'Liberation Sans',sans-serif;white-space:pre;transform-origin:0 50%;transform:scaleX(0.9953);">8080</div>
<div style="position:absolute;left:2418.45px;top:355.21px;height:32px;line-height:32px;font-size:20px;color:#1f1f1f;font-weight:normal;font-family:'Liberation Sans',sans-serif;white-space:pre;transform-origin:0 50%;transform:scaleX(0.9450);">87</div>
<div style="position:absolute;left:0px;top:384.5px;width:2545px;height:29.08px;background:#f8f8f8"></div>
<div style="position:absolute;left:11.74px;top:383.79px;height:32px;line-height:32px;font-size:20px;color:#1f1f1f;font-weight:normal;font-family:'Liberation Sans',sans-serif;white-space:pre;transform-origin:0 50%;transform:scaleX(0.9594);">155</div>
<div style="position:absolute;left:68.50px;top:383.79px;height:32px;line-height:32px;font-size:20px;color:#1f1f1f;font-weight:normal;font-family:'Liberation Sans',sans-serif;white-space:pre;transform-origin:0 50%;transform:scaleX(1.0008);">https://www.googletagmana...</div>
<div style="position:absolute;left:339.92px;top:383.79px;height:32px;line-height:32px;font-size:20px;color:#1f1f1f;font-weight:normal;font-family:'Liberation Sans',sans-serif;white-space:pre;transform-origin:0 50%;transform:scaleX(0.7825);">GET</div>
<div style="position:absolute;left:427.00px;top:383.79px;height:32px;line-height:32px;font-size:20px;color:#1f1f1f;font-weight:normal;font-family:'Liberation Sans',sans-serif;white-space:pre;transform-origin:0 50%;transform:scaleX(1.0142);">/a?id=GTM-MW3R8V&amp;v=3&amp;t=t&amp;...</div>
<svg style="position:absolute;left:755.3px;top:391.79px;" width="20" height="16" viewBox="0 0 20 16"><polyline points="2.5,8.5 6.5,13 15.5,2.5" fill="none" stroke="#1a1a1a" stroke-width="2.6" stroke-linecap="round" stroke-linejoin="round"/></svg>
<div style="position:absolute;left:927.32px;top:383.79px;height:32px;line-height:32px;font-size:20px;color:#1f1f1f;font-weight:normal;font-family:'Liberation Sans',sans-serif;white-space:pre;transform-origin:0 50%;transform:scaleX(0.9844);">200</div>
<div style="position:absolute;left:1059.51px;top:383.79px;height:32px;line-height:32px;font-size:20px;color:#1f1f1f;font-weight:normal;font-family:'Liberation Sans',sans-serif;white-space:pre;transform-origin:0 50%;transform:scaleX(0.9937);">204</div>
<div style="position:absolute;left:1146.45px;top:383.79px;height:32px;line-height:32px;font-size:20px;color:#1f1f1f;font-weight:normal;font-family:'Liberation Sans',sans-serif;white-space:pre;transform-origin:0 50%;transform:scaleX(0.9472);">HTML</div>
<svg style="position:absolute;left:1745.6px;top:391.79px;" width="20" height="16" viewBox="0 0 20 16"><polyline points="2.5,8.5 6.5,13 15.5,2.5" fill="none" stroke="#1a1a1a" stroke-width="2.6" stroke-linecap="round" stroke-linejoin="round"/></svg>
<div style="position:absolute;left:1809.75px;top:383.79px;height:32px;line-height:32px;font-size:20px;color:#1f1f1f;font-weight:normal;font-family:'Liberation Sans',sans-serif;white-space:pre;transform-origin:0 50%;transform:scaleX(0.9480);">114.250.67.41</div>
<div style="position:absolute;left:2156.66px;top:383.79px;height:32px;line-height:32px;font-size:20px;color:#1f1f1f;font-weight:normal;font-family:'Liberation Sans',sans-serif;white-space:pre;transform-origin:0 50%;transform:scaleX(0.9360);">21:04:59 16 ...</div>
<div style="position:absolute;left:2288.80px;top:383.79px;height:32px;line-height:32px;font-size:20px;color:#1f1f1f;font-weight:normal;font-family:'Liberation Sans',sans-serif;white-space:pre;transform-origin:0 50%;transform:scaleX(0.9953);">8080</div>
<div style="position:absolute;left:2418.45px;top:383.79px;height:32px;line-height:32px;font-size:20px;color:#1f1f1f;font-weight:normal;font-family:'Liberation Sans',sans-serif;white-space:pre;transform-origin:0 50%;transform:scaleX(0.9450);">112</div>
<div style="position:absolute;left:0px;top:413.08px;width:2545px;height:29.08px;background:#c6d7ef"></div>
<div style="position:absolute;left:0;top:413.08px;width:2545px;height:28.98px;box-sizing:border-box;border:2.4px solid #2d5d9a"></div>
<div style="position:absolute;left:11.74px;top:412.37px;height:32px;line-height:32px;font-size:20px;color:#1f1f1f;font-weight:normal;font-family:'Liberation Sans',sans-serif;white-space:pre;transform-origin:0 50%;transform:scaleX(0.9594);">156</div>
<div style="position:absolute;left:68.50px;top:412.37px;height:32px;line-height:32px;font-size:20px;color:#1f1f1f;font-weight:normal;font-family:'Liberation Sans',sans-serif;white-space:pre;transform-origin:0 50%;transform:scaleX(1.0008);">https://www.googletagmana...</div>
<div style="position:absolute;left:339.92px;top:412.37px;height:32px;line-height:32px;font-size:20px;color:#1f1f1f;font-weight:normal;font-family:'Liberation Sans',sans-serif;white-space:pre;transform-origin:0 50%;transform:scaleX(0.7825);">GET</div>
<div style="position:absolute;left:427.00px;top:412.37px;height:32px;line-height:32px;font-size:20px;color:#1f1f1f;font-weight:normal;font-family:'Liberation Sans',sans-serif;white-space:pre;transform-origin:0 50%;transform:scaleX(1.0142);">/a?id=GTM-MW3R8V&amp;v=3&amp;t=t&amp;...</div>
<svg style="position:absolute;left:755.3px;top:420.37px;" width="20" height="16" viewBox="0 0 20 16"><polyline points="2.5,8.5 6.5,13 15.5,2.5" fill="none" stroke="#1a1a1a" stroke-width="2.6" stroke-linecap="round" stroke-linejoin="round"/></svg>
<div style="position:absolute;left:927.32px;top:412.37px;height:32px;line-height:32px;font-size:20px;color:#1f1f1f;font-weight:normal;font-family:'Liberation Sans',sans-serif;white-space:pre;transform-origin:0 50%;transform:scaleX(0.9844);">200</div>
<div style="position:absolute;left:1059.51px;top:412.37px;height:32px;line-height:32px;font-size:20px;color:#1f1f1f;font-weight:normal;font-family:'Liberation Sans',sans-serif;white-space:pre;transform-origin:0 50%;transform:scaleX(0.9937);">204</div>
<div style="position:absolute;left:1146.45px;top:412.37px;height:32px;line-height:32px;font-size:20px;color:#1f1f1f;font-weight:normal;font-family:'Liberation Sans',sans-serif;white-space:pre;transform-origin:0 50%;transform:scaleX(0.9472);">HTML</div>
<svg style="position:absolute;left:1745.6px;top:420.37px;" width="20" height="16" viewBox="0 0 20 16"><polyline points="2.5,8.5 6.5,13 15.5,2.5" fill="none" stroke="#1a1a1a" stroke-width="2.6" stroke-linecap="round" stroke-linejoin="round"/></svg>
<div style="position:absolute;left:1809.75px;top:412.37px;height:32px;line-height:32px;font-size:20px;color:#1f1f1f;font-weight:normal;font-family:'Liberation Sans',sans-serif;white-space:pre;transform-origin:0 50%;transform:scaleX(0.9480);">114.250.67.41</div>
<div style="position:absolute;left:2156.66px;top:412.37px;height:32px;line-height:32px;font-size:20px;color:#1f1f1f;font-weight:normal;font-family:'Liberation Sans',sans-serif;white-space:pre;transform-origin:0 50%;transform:scaleX(0.9360);">21:04:59 16 ...</div>
<div style="position:absolute;left:2288.80px;top:412.37px;height:32px;line-height:32px;font-size:20px;color:#1f1f1f;font-weight:normal;font-family:'Liberation Sans',sans-serif;white-space:pre;transform-origin:0 50%;transform:scaleX(0.9953);">8080</div>
<div style="position:absolute;left:2418.45px;top:412.37px;height:32px;line-height:32px;font-size:20px;color:#1f1f1f;font-weight:normal;font-family:'Liberation Sans',sans-serif;white-space:pre;transform-origin:0 50%;transform:scaleX(0.9450);">83</div>
<div style="position:absolute;left:0px;top:441.65999999999997px;width:2545px;height:29.08px;background:#f8f8f8"></div>
<div style="position:absolute;left:11.75px;top:440.95px;height:32px;line-height:32px;font-size:20px;color:#1f1f1f;font-weight:normal;font-family:'Liberation Sans',sans-serif;white-space:pre;transform-origin:0 50%;transform:scaleX(0.9531);">157</div>
<div style="position:absolute;left:68.50px;top:440.95px;height:32px;line-height:32px;font-size:20px;color:#1f1f1f;font-weight:normal;font-family:'Liberation Sans',sans-serif;white-space:pre;transform-origin:0 50%;transform:scaleX(1.0008);">https://www.googletagmana...</div>
<div style="position:absolute;left:339.92px;top:440.95px;height:32px;line-height:32px;font-size:20px;color:#1f1f1f;font-weight:normal;font-family:'Liberation Sans',sans-serif;white-space:pre;transform-origin:0 50%;transform:scaleX(0.7825);">GET</div>
<div style="position:absolute;left:427.00px;top:440.95px;height:32px;line-height:32px;font-size:20px;color:#1f1f1f;font-weight:normal;font-family:'Liberation Sans',sans-serif;white-space:pre;transform-origin:0 50%;transform:scaleX(1.0142);">/a?id=GTM-MW3R8V&amp;v=3&amp;t=t&amp;...</div>
<svg style="position:absolute;left:755.3px;top:448.95px;" width="20" height="16" viewBox="0 0 20 16"><polyline points="2.5,8.5 6.5,13 15.5,2.5" fill="none" stroke="#1a1a1a" stroke-width="2.6" stroke-linecap="round" stroke-linejoin="round"/></svg>
<div style="position:absolute;left:927.32px;top:440.95px;height:32px;line-height:32px;font-size:20px;color:#1f1f1f;font-weight:normal;font-family:'Liberation Sans',sans-serif;white-space:pre;transform-origin:0 50%;transform:scaleX(0.9844);">200</div>
<div style="position:absolute;left:1059.51px;top:440.95px;height:32px;line-height:32px;font-size:20px;color:#1f1f1f;font-weight:normal;font-family:'Liberation Sans',sans-serif;white-space:pre;transform-origin:0 50%;transform:scaleX(0.9937);">204</div>
<div style="position:absolute;left:1146.45px;top:440.95px;height:32px;line-height:32px;font-size:20px;color:#1f1f1f;font-weight:normal;font-family:'Liberation Sans',sans-serif;white-space:pre;transform-origin:0 50%;transform:scaleX(0.9472);">HTML</div>
<svg style="position:absolute;left:1745.6px;top:448.95px;" width="20" height="16" viewBox="0 0 20 16"><polyline points="2.5,8.5 6.5,13 15.5,2.5" fill="none" stroke="#1a1a1a" stroke-width="2.6" stroke-linecap="round" stroke-linejoin="round"/></svg>
<div style="position:absolute;left:1809.75px;top:440.95px;height:32px;line-height:32px;font-size:20px;color:#1f1f1f;font-weight:normal;font-family:'Liberation Sans',sans-serif;white-space:pre;transform-origin:0 50%;transform:scaleX(0.9480);">114.250.67.41</div>
<div style="position:absolute;left:2156.66px;top:440.95px;height:32px;line-height:32px;font-size:20px;color:#1f1f1f;font-weight:normal;font-family:'Liberation Sans',sans-serif;white-space:pre;transform-origin:0 50%;transform:scaleX(0.9360);">21:04:59 16 ...</div>
<div style="position:absolute;left:2288.80px;top:440.95px;height:32px;line-height:32px;font-size:20px;color:#1f1f1f;font-weight:normal;font-family:'Liberation Sans',sans-serif;white-space:pre;transform-origin:0 50%;transform:scaleX(0.9953);">8080</div>
<div style="position:absolute;left:2418.45px;top:440.95px;height:32px;line-height:32px;font-size:20px;color:#1f1f1f;font-weight:normal;font-family:'Liberation Sans',sans-serif;white-space:pre;transform-origin:0 50%;transform:scaleX(0.9450);">81</div>
<div style="position:absolute;left:0px;top:470.24px;width:2545px;height:29.08px;background:#ffffff"></div>
<div style="position:absolute;left:11.72px;top:469.53px;height:32px;line-height:32px;font-size:20px;color:#1f1f1f;font-weight:normal;font-family:'Liberation Sans',sans-serif;white-space:pre;transform-origin:0 50%;transform:scaleX(0.9750);">305</div>
<div style="position:absolute;left:68.50px;top:469.53px;height:32px;line-height:32px;font-size:20px;color:#1f1f1f;font-weight:normal;font-family:'Liberation Sans',sans-serif;white-space:pre;transform-origin:0 50%;transform:scaleX(1.0008);">https://www.googletagmana...</div>
<div style="position:absolute;left:339.92px;top:469.53px;height:32px;line-height:32px;font-size:20px;color:#1f1f1f;font-weight:normal;font-family:'Liberation Sans',sans-serif;white-space:pre;transform-origin:0 50%;transform:scaleX(0.7825);">GET</div>
<div style="position:absolute;left:427.00px;top:469.53px;height:32px;line-height:32px;font-size:20px;color:#1f1f1f;font-weight:normal;font-family:'Liberation Sans',sans-serif;white-space:pre;transform-origin:0 50%;transform:scaleX(1.0142);">/a?id=GTM-MW3R8V&amp;v=3&amp;t=t&amp;...</div>
<svg style="position:absolute;left:755.3px;top:477.53000000000003px;" width="20" height="16" viewBox="0 0 20 16"><polyline points="2.5,8.5 6.5,13 15.5,2.5" fill="none" stroke="#1a1a1a" stroke-width="2.6" stroke-linecap="round" stroke-linejoin="round"/></svg>
<div style="position:absolute;left:927.32px;top:469.53px;height:32px;line-height:32px;font-size:20px;color:#1f1f1f;font-weight:normal;font-family:'Liberation Sans',sans-serif;white-space:pre;transform-origin:0 50%;transform:scaleX(0.9844);">200</div>
<div style="position:absolute;left:1059.51px;top:469.53px;height:32px;line-height:32px;font-size:20px;color:#1f1f1f;font-weight:normal;font-family:'Liberation Sans',sans-serif;white-space:pre;transform-origin:0 50%;transform:scaleX(0.9937);">204</div>
<div style="position:absolute;left:1146.45px;top:469.53px;height:32px;line-height:32px;font-size:20px;color:#1f1f1f;font-weight:normal;font-family:'Liberation Sans',sans-serif;white-space:pre;transform-origin:0 50%;transform:scaleX(0.9472);">HTML</div>
<svg style="position:absolute;left:1745.6px;top:477.53000000000003px;" width="20" height="16" viewBox="0 0 20 16"><polyline points="2.5,8.5 6.5,13 15.5,2.5" fill="none" stroke="#1a1a1a" stroke-width="2.6" stroke-linecap="round" stroke-linejoin="round"/></svg>
<div style="position:absolute;left:1809.75px;top:469.53px;height:32px;line-height:32px;font-size:20px;color:#1f1f1f;font-weight:normal;font-family:'Liberation Sans',sans-serif;white-space:pre;transform-origin:0 50%;transform:scaleX(0.9480);">114.250.67.41</div>
<div style="position:absolute;left:2156.67px;top:469.53px;height:32px;line-height:32px;font-size:20px;color:#1f1f1f;font-weight:normal;font-family:'Liberation Sans',sans-serif;white-space:pre;transform-origin:0 50%;transform:scaleX(0.9315);">21:05:11 16 ...</div>
<div style="position:absolute;left:2288.80px;top:469.53px;height:32px;line-height:32px;font-size:20px;color:#1f1f1f;font-weight:normal;font-family:'Liberation Sans',sans-serif;white-space:pre;transform-origin:0 50%;transform:scaleX(0.9953);">8080</div>
<div style="position:absolute;left:2418.45px;top:469.53px;height:32px;line-height:32px;font-size:20px;color:#1f1f1f;font-weight:normal;font-family:'Liberation Sans',sans-serif;white-space:pre;transform-origin:0 50%;transform:scaleX(0.9450);">80</div>
<div style="position:absolute;left:0px;top:498.81999999999994px;width:2545px;height:29.08px;background:#e8ecf3"></div>
<div style="position:absolute;left:11.71px;top:498.11px;height:32px;line-height:32px;font-size:20px;color:#1f1f1f;font-weight:normal;font-family:'Liberation Sans',sans-serif;white-space:pre;transform-origin:0 50%;transform:scaleX(0.9905);">12</div>
<div style="position:absolute;left:68.49px;top:498.11px;height:32px;line-height:32px;font-size:20px;color:#1f1f1f;font-weight:normal;font-family:'Liberation Sans',sans-serif;white-space:pre;transform-origin:0 50%;transform:scaleX(1.0071);">https://www.deepl.com</div>
<div style="position:absolute;left:339.92px;top:498.11px;height:32px;line-height:32px;font-size:20px;color:#1f1f1f;font-weight:normal;font-family:'Liberation Sans',sans-serif;white-space:pre;transform-origin:0 50%;transform:scaleX(0.7825);">GET</div>
<div style="position:absolute;left:427.00px;top:498.11px;height:32px;line-height:32px;font-size:20px;color:#1f1f1f;font-weight:normal;font-family:'Liberation Sans',sans-serif;white-space:pre;transform-origin:0 50%;transform:scaleX(1.0202);">/translator</div>
<div style="position:absolute;left:927.31px;top:498.11px;height:32px;line-height:32px;font-size:20px;color:#1f1f1f;font-weight:normal;font-family:'Liberation Sans',sans-serif;white-space:pre;transform-origin:0 50%;transform:scaleX(0.9906);">301</div>
<div style="position:absolute;left:1059.50px;top:498.11px;height:32px;line-height:32px;font-size:20px;color:#1f1f1f;font-weight:normal;font-family:'Liberation Sans',sans-serif;white-space:pre;transform-origin:0 50%;transform:scaleX(0.9977);">1028</div>
<div style="position:absolute;left:1146.45px;top:498.11px;height:32px;line-height:32px;font-size:20px;color:#1f1f1f;font-weight:normal;font-family:'Liberation Sans',sans-serif;white-space:pre;transform-origin:0 50%;transform:scaleX(0.9472);">HTML</div>
<div style="position:absolute;left:1362.84px;top:498.11px;height:32px;line-height:32px;font-size:20px;color:#1f1f1f;font-weight:normal;font-family:'Liberation Sans',sans-serif;white-space:pre;transform-origin:0 50%;transform:scaleX(0.9585);">301 Moved Permanent...</div>
<svg style="position:absolute;left:1745.6px;top:506.1099999999999px;" width="20" height="16" viewBox="0 0 20 16"><polyline points="2.5,8.5 6.5,13 15.5,2.5" fill="none" stroke="#1a1a1a" stroke-width="2.6" stroke-linecap="round" stroke-linejoin="round"/></svg>
<div style="position:absolute;left:1809.75px;top:498.11px;height:32px;line-height:32px;font-size:20px;color:#1f1f1f;font-weight:normal;font-family:'Liberation Sans',sans-serif;white-space:pre;transform-origin:0 50%;transform:scaleX(0.9532);">172.64.148.47</div>
<div style="position:absolute;left:1982.56px;top:498.11px;height:32px;line-height:32px;font-size:20px;color:#1f1f1f;font-weight:normal;font-family:'Liberation Sans',sans-serif;white-space:pre;transform-origin:0 50%;transform:scaleX(0.9444);">userCountry=CN;...</div>
<div style="position:absolute;left:2156.66px;top:498.11px;height:32px;line-height:32px;font-size:20px;color:#1f1f1f;font-weight:normal;font-family:'Liberation Sans',sans-serif;white-space:pre;transform-origin:0 50%;transform:scaleX(0.9360);">21:04:55 16 ...</div>
<div style="position:absolute;left:2288.80px;top:498.11px;height:32px;line-height:32px;font-size:20px;color:#1f1f1f;font-weight:normal;font-family:'Liberation Sans',sans-serif;white-space:pre;transform-origin:0 50%;transform:scaleX(0.9953);">8080</div>
<div style="position:absolute;left:2418.43px;top:498.11px;height:32px;line-height:32px;font-size:20px;color:#1f1f1f;font-weight:normal;font-family:'Liberation Sans',sans-serif;white-space:pre;transform-origin:0 50%;transform:scaleX(0.9688);">262</div>
<div style="position:absolute;left:0px;top:527.4px;width:2545px;height:29.08px;background:#ffffff"></div>
<div style="position:absolute;left:11.72px;top:526.69px;height:32px;line-height:32px;font-size:20px;color:#1f1f1f;font-weight:normal;font-family:'Liberation Sans',sans-serif;white-space:pre;transform-origin:0 50%;transform:scaleX(0.9810);">33</div>
<div style="position:absolute;left:68.49px;top:526.69px;height:32px;line-height:32px;font-size:20px;color:#1f1f1f;font-weight:normal;font-family:'Liberation Sans',sans-serif;white-space:pre;transform-origin:0 50%;transform:scaleX(1.0071);">https://www.deepl.com</div>
<div style="position:absolute;left:339.92px;top:526.69px;height:32px;line-height:32px;font-size:20px;color:#1f1f1f;font-weight:normal;font-family:'Liberation Sans',sans-serif;white-space:pre;transform-origin:0 50%;transform:scaleX(0.7825);">GET</div>
<div style="position:absolute;left:427.00px;top:526.69px;height:32px;line-height:32px;font-size:20px;color:#1f1f1f;font-weight:normal;font-family:'Liberation Sans',sans-serif;white-space:pre;transform-origin:0 50%;transform:scaleX(1.0259);">/zh/translator</div>
<div style="position:absolute;left:927.32px;top:526.69px;height:32px;line-height:32px;font-size:20px;color:#1f1f1f;font-weight:normal;font-family:'Liberation Sans',sans-serif;white-space:pre;transform-origin:0 50%;transform:scaleX(0.9844);">200</div>
<div style="position:absolute;left:1059.50px;top:526.69px;height:32px;line-height:32px;font-size:20px;color:#1f1f1f;font-weight:normal;font-family:'Liberation Sans',sans-serif;white-space:pre;transform-origin:0 50%;transform:scaleX(0.9985);">713670</div>
<div style="position:absolute;left:1146.45px;top:526.69px;height:32px;line-height:32px;font-size:20px;color:#1f1f1f;font-weight:normal;font-family:'Liberation Sans',sans-serif;white-space:pre;transform-origin:0 50%;transform:scaleX(0.9472);">HTML</div>
<div style="position:absolute;left:1362.86px;top:527.19px;height:31px;line-height:31px;font-size:19.5px;color:#1f1f1f;font-weight:normal;font-family:'Liberation Sans',sans-serif;white-space:pre;transform-origin:0 50%;transform:scaleX(0.9369);">DeepLç¿»è¯□å□¨|å¨ä¸...</div>
<svg style="position:absolute;left:1745.6px;top:534.6899999999999px;" width="20" height="16" viewBox="0 0 20 16"><polyline points="2.5,8.5 6.5,13 15.5,2.5" fill="none" stroke="#1a1a1a" stroke-width="2.6" stroke-linecap="round" stroke-linejoin="round"/></svg>
<div style="position:absolute;left:1809.75px;top:526.69px;height:32px;line-height:32px;font-size:20px;color:#1f1f1f;font-weight:normal;font-family:'Liberation Sans',sans-serif;white-space:pre;transform-origin:0 50%;transform:scaleX(0.9532);">172.64.148.47</div>
<div style="position:absolute;left:1983.50px;top:526.69px;height:32px;line-height:32px;font-size:20px;color:#1f1f1f;font-weight:normal;font-family:'Liberation Sans',sans-serif;white-space:pre;transform-origin:0 50%;transform:scaleX(0.9703);">verifiedBot=false</div>
<div style="position:absolute;left:2156.66px;top:526.69px;height:32px;line-height:32px;font-size:20px;color:#1f1f1f;font-weight:normal;font-family:'Liberation Sans',sans-serif;white-space:pre;transform-origin:0 50%;transform:scaleX(0.9360);">21:04:56 16 ...</div>
<div style="position:absolute;left:2288.80px;top:526.69px;height:32px;line-height:32px;font-size:20px;color:#1f1f1f;font-weight:normal;font-family:'Liberation Sans',sans-serif;white-space:pre;transform-origin:0 50%;transform:scaleX(0.9953);">8080</div>
<div style="position:absolute;left:2418.45px;top:526.69px;height:32px;line-height:32px;font-size:20px;color:#1f1f1f;font-weight:normal;font-family:'Liberation Sans',sans-serif;white-space:pre;transform-origin:0 50%;transform:scaleX(0.9450);">213</div>
<div style="position:absolute;left:0px;top:555.98px;width:2545px;height:29.08px;background:#f8f8f8"></div>
<div style="position:absolute;left:11.76px;top:555.27px;height:32px;line-height:32px;font-size:20px;color:#1f1f1f;font-weight:normal;font-family:'Liberation Sans',sans-serif;white-space:pre;transform-origin:0 50%;transform:scaleX(0.9406);">151</div>
<div style="position:absolute;left:68.49px;top:555.27px;height:32px;line-height:32px;font-size:20px;color:#1f1f1f;font-weight:normal;font-family:'Liberation Sans',sans-serif;white-space:pre;transform-origin:0 50%;transform:scaleX(1.0071);">https://www.deepl.com</div>
<div style="position:absolute;left:339.92px;top:555.27px;height:32px;line-height:32px;font-size:20px;color:#1f1f1f;font-weight:normal;font-family:'Liberation Sans',sans-serif;white-space:pre;transform-origin:0 50%;transform:scaleX(0.7825);">GET</div>
<div style="position:absolute;left:427.00px;top:555.27px;height:32px;line-height:32px;font-size:20px;color:#1f1f1f;font-weight:normal;font-family:'Liberation Sans',sans-serif;white-space:pre;transform-origin:0 50%;transform:scaleX(0.9931);">/img/ai-labs/labs-cubes-v07.3.2-Gr...</div>
<div style="position:absolute;left:927.31px;top:555.27px;height:32px;line-height:32px;font-size:20px;color:#1f1f1f;font-weight:normal;font-family:'Liberation Sans',sans-serif;white-space:pre;transform-origin:0 50%;transform:scaleX(0.9906);">206</div>
<div style="position:absolute;left:1059.51px;top:555.27px;height:32px;line-height:32px;font-size:20px;color:#1f1f1f;font-weight:normal;font-family:'Liberation Sans',sans-serif;white-space:pre;transform-origin:0 50%;transform:scaleX(0.9921);">1299653</div>
<div style="position:absolute;left:1147.40px;top:555.27px;height:32px;line-height:32px;font-size:20px;color:#1f1f1f;font-weight:normal;font-family:'Liberation Sans',sans-serif;white-space:pre;transform-origin:0 50%;transform:scaleX(0.9915);">video</div>
<div style="position:absolute;left:1255.20px;top:555.27px;height:32px;line-height:32px;font-size:20px;color:#1f1f1f;font-weight:normal;font-family:'Liberation Sans',sans-serif;white-space:pre;transform-origin:0 50%;transform:scaleX(0.9792);">webm</div>
<svg style="position:absolute;left:1745.6px;top:563.27px;" width="20" height="16" viewBox="0 0 20 16"><polyline points="2.5,8.5 6.5,13 15.5,2.5" fill="none" stroke="#1a1a1a" stroke-width="2.6" stroke-linecap="round" stroke-linejoin="round"/></svg>
<div style="position:absolute;left:1809.75px;top:555.27px;height:32px;line-height:32px;font-size:20px;color:#1f1f1f;font-weight:normal;font-family:'Liberation Sans',sans-serif;white-space:pre;transform-origin:0 50%;transform:scaleX(0.9532);">172.64.148.47</div>
<div style="position:absolute;left:1983.50px;top:555.27px;height:32px;line-height:32px;font-size:20px;color:#1f1f1f;font-weight:normal;font-family:'Liberation Sans',sans-serif;white-space:pre;transform-origin:0 50%;transform:scaleX(0.9703);">verifiedBot=false</div>
<div style="position:absolute;left:2156.66px;top:555.27px;height:32px;line-height:32px;font-size:20px;color:#1f1f1f;font-weight:normal;font-family:'Liberation Sans',sans-serif;white-space:pre;transform-origin:0 50%;transform:scaleX(0.9360);">21:04:59 16 ...</div>
<div style="position:absolute;left:2288.80px;top:555.27px;height:32px;line-height:32px;font-size:20px;color:#1f1f1f;font-weight:normal;font-family:'Liberation Sans',sans-serif;white-space:pre;transform-origin:0 50%;transform:scaleX(0.9953);">8080</div>
<div style="position:absolute;left:2418.45px;top:555.27px;height:32px;line-height:32px;font-size:20px;color:#1f1f1f;font-weight:normal;font-family:'Liberation Sans',sans-serif;white-space:pre;transform-origin:0 50%;transform:scaleX(0.9450);">215</div>
<div style="position:absolute;left:0px;top:584px;width:2559px;height:1.3px;background:#dadada"></div>
<div style="position:absolute;left:2545px;top:203px;width:14px;height:381px;background:#fafafa"></div>
<div style="position:absolute;left:2548px;top:210px;width:8px;height:24px;border-radius:4px;background:#d4d4d4"></div>
<div style="position:absolute;left:0px;top:585px;width:1000.5px;height:824px;background:#ffffff"></div>
<div style="position:absolute;left:1001.5px;top:585px;width:1001px;height:824px;background:#ffffff"></div>
<div style="position:absolute;left:1000.3px;top:585px;width:1.1px;height:895px;background:#e0e0e0"></div>
<div style="position:absolute;left:2002px;top:584px;width:1.3px;height:896px;background:#dcdcdc"></div>
<div style="position:absolute;left:22.97px;top:598.50px;height:33px;line-height:33px;font-size:21px;color:#111;font-weight:bold;font-family:'Liberation Sans',sans-serif;white-space:pre;transform-origin:0 50%;transform:scaleX(0.9674);">请求</div>
<div style="position:absolute;left:21.06px;top:656.50px;height:31px;line-height:31px;font-size:19.5px;color:#1f1f1f;font-weight:normal;font-family:'Liberation Sans',sans-serif;white-space:pre;transform-origin:0 50%;transform:scaleX(0.9359);">美化</div>
<div style="position:absolute;left:103.07px;top:656.50px;height:31px;line-height:31px;font-size:19.5px;color:#1f1f1f;font-weight:normal;font-family:'Liberation Sans',sans-serif;white-space:pre;transform-origin:0 50%;transform:scaleX(0.9263);">Raw</div>
<div style="position:absolute;left:183.65px;top:656.50px;height:31px;line-height:31px;font-size:19.5px;color:#1f1f1f;font-weight:normal;font-family:'Liberation Sans',sans-serif;white-space:pre;transform-origin:0 50%;transform:scaleX(0.9500);">Hex</div>
<div style="position:absolute;left:0px;top:694px;width:80.7px;height:4.2px;background:#d95b29"></div>
<div style="position:absolute;left:0px;top:699px;width:1000.3px;height:1.2px;background:#e2e2e2"></div>
<svg style="position:absolute;left:833px;top:656px;" width="28" height="30" viewBox="0 0 28 30"><g fill="none" stroke="#222" stroke-width="2.2" stroke-linecap="round"><path d="M3.5 15 C7 8.5 12 6.5 15.5 7.3 C19.5 8 23 11 24.5 14.5 C21 20.5 16 22.5 12 22 C8.5 21.5 5.5 18.5 3.5 15 Z"/><path d="M11.5 17.5 A4 4 0 0 1 17 12"/><line x1="3.5" y1="3.5" x2="24.5" y2="26"/></g></svg>
<div style="position:absolute;left:875.7px;top:656.3px;width:28.2px;height:28.5px;border-radius:6px;background:#2a64a0"></div>
<svg style="position:absolute;left:875.7px;top:656.3px;" width="28.2" height="28.5" viewBox="0 0 28.2 28.5"><g fill="none" stroke="#fff" stroke-width="2.2" stroke-linecap="round"><line x1="6.5" y1="7.5" x2="21.5" y2="7.5"/><path d="M6.5 14.2 H18 C20.8 14.2 22 15.8 22 17.8 C22 19.8 20.5 21.3 18 21.3 H14"/><polyline points="16.3,18.8 13.7,21.3 16.3,23.8" stroke-width="1.8"/><line x1="6.5" y1="21" x2="11" y2="21"/></g></svg>
<div style="position:absolute;left:926.00px;top:653.50px;height:33px;line-height:33px;font-size:21px;color:#222;font-weight:normal;font-family:'Liberation Sans',sans-serif;white-space:pre;transform-origin:0 50%;transform:scaleX(0.9375);">\n</div>
<svg style="position:absolute;left:966px;top:662px;" width="18" height="18" viewBox="0 0 18 18"><g stroke="#222" stroke-width="2.2"><line x1="0" y1="3" x2="15" y2="3"/><line x1="0" y1="8.7" x2="15" y2="8.7"/><line x1="0" y1="14.6" x2="15" y2="14.6"/></g></svg>
<div style="position:absolute;left:1024.60px;top:598.50px;height:33px;line-height:33px;font-size:21px;color:#111;font-weight:bold;font-family:'Liberation Sans',sans-serif;white-space:pre;transform-origin:0 50%;transform:scaleX(0.9786);">响应</div>
<div style="position:absolute;left:1023.29px;top:656.50px;height:31px;line-height:31px;font-size:19.5px;color:#1f1f1f;font-weight:normal;font-family:'Liberation Sans',sans-serif;white-space:pre;transform-origin:0 50%;transform:scaleX(0.9103);">美化</div>
<div style="position:absolute;left:1104.79px;top:656.50px;height:31px;line-height:31px;font-size:19.5px;color:#1f1f1f;font-weight:normal;font-family:'Liberation Sans',sans-serif;white-space:pre;transform-origin:0 50%;transform:scaleX(0.9132);">Raw</div>
<div style="position:absolute;left:1186.27px;top:656.50px;height:31px;line-height:31px;font-size:19.5px;color:#1f1f1f;font-weight:normal;font-family:'Liberation Sans',sans-serif;white-space:pre;transform-origin:0 50%;transform:scaleX(0.9265);">Hex</div>
<div style="position:absolute;left:1264.20px;top:656.50px;height:31px;line-height:31px;font-size:19.5px;color:#1f1f1f;font-weight:normal;font-family:'Liberation Sans',sans-serif;white-space:pre;transform-origin:0 50%;transform:scaleX(0.9063);">页面渲染</div>
<div style="position:absolute;left:1001.6px;top:694px;width:81px;height:4.2px;background:#d95b29"></div>
<div style="position:absolute;left:1001.6px;top:699px;width:1000.4px;height:1.2px;background:#e2e2e2"></div>
<svg style="position:absolute;left:1835px;top:656px;" width="28" height="30" viewBox="0 0 28 30"><g fill="none" stroke="#222" stroke-width="2.2" stroke-linecap="round"><path d="M3.5 15 C7 8.5 12 6.5 15.5 7.3 C19.5 8 23 11 24.5 14.5 C21 20.5 16 22.5 12 22 C8.5 21.5 5.5 18.5 3.5 15 Z"/><path d="M11.5 17.5 A4 4 0 0 1 17 12"/><line x1="3.5" y1="3.5" x2="24.5" y2="26"/></g></svg>
<div style="position:absolute;left:1877.7px;top:656.3px;width:28.2px;height:28.5px;border-radius:6px;background:#2a64a0"></div>
<svg style="position:absolute;left:1877.7px;top:656.3px;" width="28.2" height="28.5" viewBox="0 0 28.2 28.5"><g fill="none" stroke="#fff" stroke-width="2.2" stroke-linecap="round"><line x1="6.5" y1="7.5" x2="21.5" y2="7.5"/><path d="M6.5 14.2 H18 C20.8 14.2 22 15.8 22 17.8 C22 19.8 20.5 21.3 18 21.3 H14"/><polyline points="16.3,18.8 13.7,21.3 16.3,23.8" stroke-width="1.8"/><line x1="6.5" y1="21" x2="11" y2="21"/></g></svg>
<div style="position:absolute;left:1928.00px;top:653.50px;height:33px;line-height:33px;font-size:21px;color:#222;font-weight:normal;font-family:'Liberation Sans',sans-serif;white-space:pre;transform-origin:0 50%;transform:scaleX(0.9375);">\n</div>
<svg style="position:absolute;left:1968px;top:662px;" width="18" height="18" viewBox="0 0 18 18"><g stroke="#222" stroke-width="2.2"><line x1="0" y1="3" x2="15" y2="3"/><line x1="0" y1="8.7" x2="15" y2="8.7"/><line x1="0" y1="14.6" x2="15" y2="14.6"/></g></svg>
<div style="position:absolute;left:1874.5px;top:599.4px;width:112.5px;height:28.4px;border-radius:6px;background:#dedede;overflow:hidden"><div style="position:absolute;left:0;top:0;width:36px;height:100%;background:#2a64a0"></div><div style="position:absolute;left:74.5px;top:0;width:1px;height:100%;background:#cfcfcf"></div></div>
<div style="position:absolute;left:1885.7px;top:607px;width:5.8px;height:12.7px;background:#fff"></div>
<div style="position:absolute;left:1895.2px;top:607px;width:5.8px;height:12.7px;background:#fff"></div>
<div style="position:absolute;left:1922.9px;top:607px;width:15.1px;height:4.5px;background:#222"></div>
<div style="position:absolute;left:1922.9px;top:615.2px;width:15.1px;height:4.5px;background:#222"></div>
<div style="position:absolute;left:1960.8px;top:607px;width:15.2px;height:12.4px;background:#222"></div>
<div style="position:absolute;left:31.3px;top:703.5px;width:953.3px;height:20.2px;background:#efefef"></div>
<div style="position:absolute;left:985px;top:700px;width:15px;height:709px;background:#f9f9f9"></div>
<div style="position:absolute;left:29.9px;top:700px;width:1.2px;height:709px;background:#e0e0e0"></div>
<div style="position:absolute;left:0px;top:1409px;width:1000.3px;height:1.2px;background:#dcdcdc"></div>
<div style="position:absolute;left:39.3px;top:703.50px;height:20.93px;line-height:20.93px;font-family:'Liberation Mono',monospace;font-size:17.5px;white-space:pre;transform-origin:0 50%;transform:scaleX(0.9988)"><span style="color:#3a3a3a">GET /a?</span><span style="color:#2b2bc8">id</span><span style="color:#3a3a3a">=</span><span style="color:#b53232">GTM-MW3R8V</span><span style="color:#3a3a3a">&amp;</span><span style="color:#2b2bc8">v</span><span style="color:#3a3a3a">=</span><span style="color:#b53232">3</span><span style="color:#3a3a3a">&amp;</span><span style="color:#2b2bc8">t</span><span style="color:#3a3a3a">=</span><span style="color:#b53232">t</span><span style="color:#3a3a3a">&amp;</span><span style="color:#2b2bc8">pid</span><span style="color:#3a3a3a">=</span><span style="color:#b53232">940362607</span><span style="color:#3a3a3a">&amp;</span><span style="color:#2b2bc8">gtm</span><span style="color:#3a3a3a">=</span><span style="color:#b53232">45He63c0h2v71075029za200zd71075029</span><span style="color:#3a3a3a">&amp;</span><span style="color:#2b2bc8">cv</span><span style="color:#3a3a3a">=</span><span style="color:#b53232">253</span><span style="color:#3a3a3a">&amp;</span></div>
<div style="position:absolute;left:39.3px;top:724.43px;height:20.93px;line-height:20.93px;font-family:'Liberation Mono',monospace;font-size:17.5px;white-space:pre;transform-origin:0 50%;transform:scaleX(1.0022)"><span style="color:#2b2bc8">rv</span><span style="color:#3a3a3a">=</span><span style="color:#b53232">63c0</span><span style="color:#3a3a3a">&amp;</span><span style="color:#2b2bc8">tc</span><span style="color:#3a3a3a">=</span><span style="color:#b53232">21</span><span style="color:#3a3a3a">&amp;</span><span style="color:#2b2bc8">x</span><span style="color:#3a3a3a">=</span><span style="color:#b53232">2</span><span style="color:#3a3a3a">&amp;</span><span style="color:#2b2bc8">tag_exp</span><span style="color:#3a3a3a">=</span></div>
<div style="position:absolute;left:39.3px;top:745.36px;height:20.93px;line-height:20.93px;font-family:'Liberation Mono',monospace;font-size:17.5px;white-space:pre;transform-origin:0 50%;transform:scaleX(0.9988)"><span style="color:#b53232">103116026~103200004~104573694~115616985~115938465~115938469~116024733~117484252</span><span style="color:#3a3a3a">&amp;</span><span style="color:#2b2bc8">es</span><span style="color:#3a3a3a">=</span><span style="color:#b53232">1</span><span style="color:#3a3a3a">&amp;</span><span style="color:#2b2bc8">e</span><span style="color:#3a3a3a">=</span><span style="color:#b53232">*</span><span style="color:#3a3a3a">&amp;</span></div>
<div style="position:absolute;left:39.3px;top:766.29px;height:20.93px;line-height:20.93px;font-family:'Liberation Mono',monospace;font-size:17.5px;white-space:pre;transform-origin:0 50%;transform:scaleX(1.0049)"><span style="color:#2b2bc8">eid</span><span style="color:#3a3a3a">=</span><span style="color:#b53232">13</span><span style="color:#3a3a3a">&amp;</span><span style="color:#2b2bc8">u</span><span style="color:#3a3a3a">=</span><span style="color:#b53232">AAAAAAAIIAAAAAAI</span><span style="color:#3a3a3a">&amp;</span><span style="color:#2b2bc8">h</span><span style="color:#3a3a3a">=</span><span style="color:#b53232">Ag</span><span style="color:#3a3a3a">&amp;</span><span style="color:#2b2bc8">z</span><span style="color:#3a3a3a">=</span><span style="color:#b53232">0</span><span style="color:#3a3a3a"> HTTP/2</span></div>
<div style="position:absolute;left:38.24px;top:783.69px;height:28px;line-height:28px;font-size:17.5px;color:#1b2580;font-weight:normal;font-family:'Liberation Mono',monospace;white-space:pre;transform-origin:0 50%;transform:scaleX(1.0615);">Host</div>
<div style="position:absolute;left:80.50px;top:783.69px;height:28px;line-height:28px;font-size:17.5px;color:#3a3a3a;font-weight:normal;font-family:'Liberation Mono',monospace;white-space:pre;">:</div>
<div style="position:absolute;left:102.90px;top:783.69px;height:28px;line-height:28px;font-size:17.5px;color:#3a3a3a;font-weight:normal;font-family:'Liberation Mono',monospace;white-space:pre;transform-origin:0 50%;transform:scaleX(1.0440);">www.googletagmanager.com</div>
<div style="position:absolute;left:38.21px;top:804.62px;height:28px;line-height:28px;font-size:17.5px;color:#1b2580;font-weight:normal;font-family:'Liberation Mono',monospace;white-space:pre;transform-origin:0 50%;transform:scaleX(1.0882);">User-Agent</div>
<div style="position:absolute;left:143.50px;top:804.62px;height:28px;line-height:28px;font-size:17.5px;color:#3a3a3a;font-weight:normal;font-family:'Liberation Mono',monospace;white-space:pre;">:</div>
<div style="position:absolute;left:163.39px;top:804.62px;height:28px;line-height:28px;font-size:17.5px;color:#3a3a3a;font-weight:normal;font-family:'Liberation Mono',monospace;white-space:pre;transform-origin:0 50%;transform:scaleX(1.0100);">Mozilla/5.0 (Windows NT 10.0; Win64; x64; rv:148.0) Gecko/20100101</div>
<div style="position:absolute;left:39.30px;top:846.48px;height:28px;line-height:28px;font-size:17.5px;color:#1b2580;font-weight:normal;font-family:'Liberation Mono',monospace;white-space:pre;transform-origin:0 50%;transform:scaleX(1.0426);">Accept</div>
<div style="position:absolute;left:101.50px;top:846.48px;height:28px;line-height:28px;font-size:17.5px;color:#3a3a3a;font-weight:normal;font-family:'Liberation Mono',monospace;white-space:pre;">:</div>
<div style="position:absolute;left:124.06px;top:846.48px;height:28px;line-height:28px;font-size:17.5px;color:#3a3a3a;font-weight:normal;font-family:'Liberation Mono',monospace;white-space:pre;transform-origin:0 50%;transform:scaleX(1.0450);">image/avif,image/webp,image/png,image/svg+xml,image/*;q=0.8,*/*;q=0.5</div>
<div style="position:absolute;left:39.30px;top:867.41px;height:28px;line-height:28px;font-size:17.5px;color:#1b2580;font-weight:normal;font-family:'Liberation Mono',monospace;white-space:pre;transform-origin:0 50%;transform:scaleX(1.0414);">Accept-Language</div>
<div style="position:absolute;left:196.00px;top:867.41px;height:28px;line-height:28px;font-size:17.5px;color:#3a3a3a;font-weight:normal;font-family:'Liberation Mono',monospace;white-space:pre;">:</div>
<div style="position:absolute;left:217.86px;top:867.41px;height:28px;line-height:28px;font-size:17.5px;color:#3a3a3a;font-weight:normal;font-family:'Liberation Mono',monospace;white-space:pre;transform-origin:0 50%;transform:scaleX(1.0443);">zh-CN,zh;q=0.9,zh-TW;q=0.8,zh-HK;q=0.7,en-US;q=0.6,en;q=0.5</div>
<div style="position:absolute;left:39.30px;top:888.34px;height:28px;line-height:28px;font-size:17.5px;color:#1b2580;font-weight:normal;font-family:'Liberation Mono',monospace;white-space:pre;transform-origin:0 50%;transform:scaleX(1.0481);">Accept-Encoding</div>
<div style="position:absolute;left:196.00px;top:888.34px;height:28px;line-height:28px;font-size:17.5px;color:#3a3a3a;font-weight:normal;font-family:'Liberation Mono',monospace;white-space:pre;">:</div>
<div style="position:absolute;left:216.89px;top:888.34px;height:28px;line-height:28px;font-size:17.5px;color:#3a3a3a;font-weight:normal;font-family:'Liberation Mono',monospace;white-space:pre;transform-origin:0 50%;transform:scaleX(1.0091);">gzip, deflate, br</div>
<div style="position:absolute;left:38.23px;top:909.26px;height:28px;line-height:28px;font-size:17.5px;color:#1b2580;font-weight:normal;font-family:'Liberation Mono',monospace;white-space:pre;transform-origin:0 50%;transform:scaleX(1.0662);">Referer</div>
<div style="position:absolute;left:112.00px;top:909.26px;height:28px;line-height:28px;font-size:17.5px;color:#3a3a3a;font-weight:normal;font-family:'Liberation Mono',monospace;white-space:pre;">:</div>
<div style="position:absolute;left:133.16px;top:909.26px;height:28px;line-height:28px;font-size:17.5px;color:#3a3a3a;font-weight:normal;font-family:'Liberation Mono',monospace;white-space:pre;transform-origin:0 50%;transform:scaleX(1.0412);">https://www.mozilla.org/</div>
<div style="position:absolute;left:38.25px;top:930.20px;height:28px;line-height:28px;font-size:17.5px;color:#1b2580;font-weight:normal;font-family:'Liberation Mono',monospace;white-space:pre;transform-origin:0 50%;transform:scaleX(1.0496);">Sec-Fetch-Storage-Access</div>
<div style="position:absolute;left:290.50px;top:930.20px;height:28px;line-height:28px;font-size:17.5px;color:#3a3a3a;font-weight:normal;font-family:'Liberation Mono',monospace;white-space:pre;">:</div>
<div style="position:absolute;left:311.66px;top:930.20px;height:28px;line-height:28px;font-size:17.5px;color:#3a3a3a;font-weight:normal;font-family:'Liberation Mono',monospace;white-space:pre;transform-origin:0 50%;transform:scaleX(1.0375);">none</div>
<div style="position:absolute;left:38.23px;top:951.12px;height:28px;line-height:28px;font-size:17.5px;color:#1b2580;font-weight:normal;font-family:'Liberation Mono',monospace;white-space:pre;transform-origin:0 50%;transform:scaleX(1.0722);">Sec-Fetch-Dest</div>
<div style="position:absolute;left:185.50px;top:951.12px;height:28px;line-height:28px;font-size:17.5px;color:#3a3a3a;font-weight:normal;font-family:'Liberation Mono',monospace;white-space:pre;">:</div>
<div style="position:absolute;left:207.79px;top:951.12px;height:28px;line-height:28px;font-size:17.5px;color:#3a3a3a;font-weight:normal;font-family:'Liberation Mono',monospace;white-space:pre;transform-origin:0 50%;transform:scaleX(1.0078);">image</div>
<div style="position:absolute;left:38.24px;top:972.05px;height:28px;line-height:28px;font-size:17.5px;color:#1b2580;font-weight:normal;font-family:'Liberation Mono',monospace;white-space:pre;transform-origin:0 50%;transform:scaleX(1.0648);">Sec-Fetch-Mode</div>
<div style="position:absolute;left:185.50px;top:972.05px;height:28px;line-height:28px;font-size:17.5px;color:#3a3a3a;font-weight:normal;font-family:'Liberation Mono',monospace;white-space:pre;">:</div>
<div style="position:absolute;left:206.74px;top:972.05px;height:28px;line-height:28px;font-size:17.5px;color:#3a3a3a;font-weight:normal;font-family:'Liberation Mono',monospace;white-space:pre;transform-origin:0 50%;transform:scaleX(1.0592);">no-cors</div>
<div style="position:absolute;left:38.24px;top:992.99px;height:28px;line-height:28px;font-size:17.5px;color:#1b2580;font-weight:normal;font-family:'Liberation Mono',monospace;white-space:pre;transform-origin:0 50%;transform:scaleX(1.0648);">Sec-Fetch-Site</div>
<div style="position:absolute;left:185.50px;top:992.99px;height:28px;line-height:28px;font-size:17.5px;color:#3a3a3a;font-weight:normal;font-family:'Liberation Mono',monospace;white-space:pre;">:</div>
<div style="position:absolute;left:206.76px;top:992.99px;height:28px;line-height:28px;font-size:17.5px;color:#3a3a3a;font-weight:normal;font-family:'Liberation Mono',monospace;white-space:pre;transform-origin:0 50%;transform:scaleX(1.0408);">cross-site</div>
<div style="position:absolute;left:38.23px;top:1013.91px;height:28px;line-height:28px;font-size:17.5px;color:#1b2580;font-weight:normal;font-family:'Liberation Mono',monospace;white-space:pre;transform-origin:0 50%;transform:scaleX(1.0699);">Priority</div>
<div style="position:absolute;left:122.50px;top:1013.91px;height:28px;line-height:28px;font-size:17.5px;color:#3a3a3a;font-weight:normal;font-family:'Liberation Mono',monospace;white-space:pre;">:</div>
<div style="position:absolute;left:144.35px;top:1013.91px;height:28px;line-height:28px;font-size:17.5px;color:#3a3a3a;font-weight:normal;font-family:'Liberation Mono',monospace;white-space:pre;transform-origin:0 50%;transform:scaleX(0.9548);">u=5, i</div>
<div style="position:absolute;left:39.30px;top:1034.85px;height:28px;line-height:28px;font-size:17.5px;color:#1b2580;font-weight:normal;font-family:'Liberation Mono',monospace;white-space:pre;transform-origin:0 50%;transform:scaleX(1.0600);">Te</div>
<div style="position:absolute;left:59.50px;top:1034.85px;height:28px;line-height:28px;font-size:17.5px;color:#3a3a3a;font-weight:normal;font-family:'Liberation Mono',monospace;white-space:pre;">:</div>
<div style="position:absolute;left:81.67px;top:1034.85px;height:28px;line-height:28px;font-size:17.5px;color:#3a3a3a;font-weight:normal;font-family:'Liberation Mono',monospace;white-space:pre;transform-origin:0 50%;transform:scaleX(1.0317);">trailers</div>
<div style="position:absolute;left:38.25px;top:825.55px;height:28px;line-height:28px;font-size:17.5px;color:#3a3a3a;font-weight:normal;font-family:'Liberation Mono',monospace;white-space:pre;transform-origin:0 50%;transform:scaleX(1.0481);">Firefox/148.0</div>
<div style="position:absolute;left:-17px;width:40px;top:703.50px;height:20.93px;line-height:20.93px;text-align:right;font-family:'Liberation Sans',sans-serif;font-size:17px;color:#707070;white-space:pre">1</div>
<div style="position:absolute;left:-17px;width:40px;top:787.22px;height:20.93px;line-height:20.93px;text-align:right;font-family:'Liberation Sans',sans-serif;font-size:17px;color:#707070;white-space:pre">2</div>
<div style="position:absolute;left:-17px;width:40px;top:808.15px;height:20.93px;line-height:20.93px;text-align:right;font-family:'Liberation Sans',sans-serif;font-size:17px;color:#707070;white-space:pre">3</div>
<div style="position:absolute;left:-17px;width:40px;top:850.01px;height:20.93px;line-height:20.93px;text-align:right;font-family:'Liberation Sans',sans-serif;font-size:17px;color:#707070;white-space:pre">4</div>
<div style="position:absolute;left:-17px;width:40px;top:870.94px;height:20.93px;line-height:20.93px;text-align:right;font-family:'Liberation Sans',sans-serif;font-size:17px;color:#707070;white-space:pre">5</div>
<div style="position:absolute;left:-17px;width:40px;top:891.87px;height:20.93px;line-height:20.93px;text-align:right;font-family:'Liberation Sans',sans-serif;font-size:17px;color:#707070;white-space:pre">6</div>
<div style="position:absolute;left:-17px;width:40px;top:912.80px;height:20.93px;line-height:20.93px;text-align:right;font-family:'Liberation Sans',sans-serif;font-size:17px;color:#707070;white-space:pre">7</div>
<div style="position:absolute;left:-17px;width:40px;top:933.73px;height:20.93px;line-height:20.93px;text-align:right;font-family:'Liberation Sans',sans-serif;font-size:17px;color:#707070;white-space:pre">8</div>
<div style="position:absolute;left:-17px;width:40px;top:954.66px;height:20.93px;line-height:20.93px;text-align:right;font-family:'Liberation Sans',sans-serif;font-size:17px;color:#707070;white-space:pre">9</div>
<div style="position:absolute;left:-17px;width:40px;top:975.59px;height:20.93px;line-height:20.93px;text-align:right;font-family:'Liberation Sans',sans-serif;font-size:17px;color:#707070;white-space:pre">10</div>
<div style="position:absolute;left:-17px;width:40px;top:996.52px;height:20.93px;line-height:20.93px;text-align:right;font-family:'Liberation Sans',sans-serif;font-size:17px;color:#707070;white-space:pre">11</div>
<div style="position:absolute;left:-17px;width:40px;top:1017.45px;height:20.93px;line-height:20.93px;text-align:right;font-family:'Liberation Sans',sans-serif;font-size:17px;color:#707070;white-space:pre">12</div>
<div style="position:absolute;left:-17px;width:40px;top:1038.38px;height:20.93px;line-height:20.93px;text-align:right;font-family:'Liberation Sans',sans-serif;font-size:17px;color:#707070;white-space:pre">13</div>
<div style="position:absolute;left:-17px;width:40px;top:1059.31px;height:20.93px;line-height:20.93px;text-align:right;font-family:'Liberation Sans',sans-serif;font-size:17px;color:#707070;white-space:pre">14</div>
<div style="position:absolute;left:-17px;width:40px;top:1080.24px;height:20.93px;line-height:20.93px;text-align:right;font-family:'Liberation Sans',sans-serif;font-size:17px;color:#707070;white-space:pre">15</div>
<div style="position:absolute;left:1032.8px;top:703.5px;width:954.2px;height:20.2px;background:#efefef"></div>
<div style="position:absolute;left:1987px;top:700px;width:15px;height:709px;background:#f9f9f9"></div>
<div style="position:absolute;left:1031.5px;top:700px;width:1.2px;height:709px;background:#e0e0e0"></div>
<div style="position:absolute;left:1001.6px;top:1409px;width:1000.4px;height:1.2px;background:#dcdcdc"></div>
<div style="position:absolute;left:1040.40px;top:699.97px;height:28px;line-height:28px;font-size:17.5px;color:#3a3a3a;font-weight:normal;font-family:'Liberation Mono',monospace;white-space:pre;transform-origin:0 50%;transform:scaleX(0.9985);">HTTP/2 200 OK</div>
<div style="position:absolute;left:1040.33px;top:720.89px;height:28px;line-height:28px;font-size:17.5px;color:#1b2580;font-weight:normal;font-family:'Liberation Mono',monospace;white-space:pre;transform-origin:0 50%;transform:scaleX(1.0675);">Date</div>
<div style="position:absolute;left:1082.60px;top:720.89px;height:28px;line-height:28px;font-size:17.5px;color:#3a3a3a;font-weight:normal;font-family:'Liberation Mono',monospace;white-space:pre;">:</div>
<div style="position:absolute;left:1103.19px;top:720.89px;height:28px;line-height:28px;font-size:17.5px;color:#3a3a3a;font-weight:normal;font-family:'Liberation Mono',monospace;white-space:pre;transform-origin:0 50%;transform:scaleX(1.0053);">Mon, 16 Mar 2026 13:05:00 GMT</div>
<div style="position:absolute;left:1040.34px;top:741.83px;height:28px;line-height:28px;font-size:17.5px;color:#1b2580;font-weight:normal;font-family:'Liberation Mono',monospace;white-space:pre;transform-origin:0 50%;transform:scaleX(1.0581);">Content-Type</div>
<div style="position:absolute;left:1166.60px;top:741.83px;height:28px;line-height:28px;font-size:17.5px;color:#3a3a3a;font-weight:normal;font-family:'Liberation Mono',monospace;white-space:pre;">:</div>
<div style="position:absolute;left:1187.37px;top:741.83px;height:28px;line-height:28px;font-size:17.5px;color:#3a3a3a;font-weight:normal;font-family:'Liberation Mono',monospace;white-space:pre;transform-origin:0 50%;transform:scaleX(1.0344);">text/html</div>
<div style="position:absolute;left:1040.24px;top:762.75px;height:28px;line-height:28px;font-size:17.5px;color:#1b2580;font-weight:normal;font-family:'Liberation Mono',monospace;white-space:pre;transform-origin:0 50%;transform:scaleX(1.1590);">Server</div>
<div style="position:absolute;left:1103.60px;top:762.75px;height:28px;line-height:28px;font-size:17.5px;color:#3a3a3a;font-weight:normal;font-family:'Liberation Mono',monospace;white-space:pre;">:</div>
<div style="position:absolute;left:1124.29px;top:762.75px;height:28px;line-height:28px;font-size:17.5px;color:#3a3a3a;font-weight:normal;font-family:'Liberation Mono',monospace;white-space:pre;transform-origin:0 50%;transform:scaleX(1.0118);">Google Tag Manager</div>
<div style="position:absolute;left:1040.34px;top:783.69px;height:28px;line-height:28px;font-size:17.5px;color:#1b2580;font-weight:normal;font-family:'Liberation Mono',monospace;white-space:pre;transform-origin:0 50%;transform:scaleX(1.0621);">Content-Length</div>
<div style="position:absolute;left:1187.60px;top:783.69px;height:28px;line-height:28px;font-size:17.5px;color:#3a3a3a;font-weight:normal;font-family:'Liberation Mono',monospace;white-space:pre;">:</div>
<div style="position:absolute;left:1209.39px;top:783.69px;height:28px;line-height:28px;font-size:17.5px;color:#3a3a3a;font-weight:normal;font-family:'Liberation Mono',monospace;white-space:pre;transform-origin:0 50%;transform:scaleX(0.9111);">0</div>
<div style="position:absolute;left:1041.40px;top:804.62px;height:28px;line-height:28px;font-size:17.5px;color:#1b2580;font-weight:normal;font-family:'Liberation Mono',monospace;white-space:pre;transform-origin:0 50%;transform:scaleX(1.0479);">X-Xss-Protection</div>
<div style="position:absolute;left:1208.60px;top:804.62px;height:28px;line-height:28px;font-size:17.5px;color:#3a3a3a;font-weight:normal;font-family:'Liberation Mono',monospace;white-space:pre;">:</div>
<div style="position:absolute;left:1229.98px;top:804.62px;height:28px;line-height:28px;font-size:17.5px;color:#3a3a3a;font-weight:normal;font-family:'Liberation Mono',monospace;white-space:pre;transform-origin:0 50%;transform:scaleX(0.9222);">0</div>
<div style="position:absolute;left:1041.40px;top:825.55px;height:28px;line-height:28px;font-size:17.5px;color:#1b2580;font-weight:normal;font-family:'Liberation Mono',monospace;white-space:pre;transform-origin:0 50%;transform:scaleX(1.0890);">Alt-Svc</div>
<div style="position:absolute;left:1114.10px;top:825.55px;height:28px;line-height:28px;font-size:17.5px;color:#3a3a3a;font-weight:normal;font-family:'Liberation Mono',monospace;white-space:pre;">:</div>
<div style="position:absolute;left:1134.77px;top:825.55px;height:28px;line-height:28px;font-size:17.5px;color:#3a3a3a;font-weight:normal;font-family:'Liberation Mono',monospace;white-space:pre;transform-origin:0 50%;transform:scaleX(1.0312);">h3=":443"; ma=2592000,h3-29=":443";ma=2592000</div>
<div style="position:absolute;left:985px;width:40px;top:703.50px;height:20.93px;line-height:20.93px;text-align:right;font-family:'Liberation Sans',sans-serif;font-size:17px;color:#707070;white-space:pre">1</div>
<div style="position:absolute;left:985px;width:40px;top:724.43px;height:20.93px;line-height:20.93px;text-align:right;font-family:'Liberation Sans',sans-serif;font-size:17px;color:#707070;white-space:pre">2</div>
<div style="position:absolute;left:985px;width:40px;top:745.36px;height:20.93px;line-height:20.93px;text-align:right;font-family:'Liberation Sans',sans-serif;font-size:17px;color:#707070;white-space:pre">3</div>
<div style="position:absolute;left:985px;width:40px;top:766.29px;height:20.93px;line-height:20.93px;text-align:right;font-family:'Liberation Sans',sans-serif;font-size:17px;color:#707070;white-space:pre">4</div>
<div style="position:absolute;left:985px;width:40px;top:787.22px;height:20.93px;line-height:20.93px;text-align:right;font-family:'Liberation Sans',sans-serif;font-size:17px;color:#707070;white-space:pre">5</div>
<div style="position:absolute;left:985px;width:40px;top:808.15px;height:20.93px;line-height:20.93px;text-align:right;font-family:'Liberation Sans',sans-serif;font-size:17px;color:#707070;white-space:pre">6</div>
<div style="position:absolute;left:985px;width:40px;top:829.08px;height:20.93px;line-height:20.93px;text-align:right;font-family:'Liberation Sans',sans-serif;font-size:17px;color:#707070;white-space:pre">7</div>
<div style="position:absolute;left:985px;width:40px;top:850.01px;height:20.93px;line-height:20.93px;text-align:right;font-family:'Liberation Sans',sans-serif;font-size:17px;color:#707070;white-space:pre">8</div>
<div style="position:absolute;left:985px;width:40px;top:870.94px;height:20.93px;line-height:20.93px;text-align:right;font-family:'Liberation Sans',sans-serif;font-size:17px;color:#707070;white-space:pre">9</div>
<div style="position:absolute;left:0px;top:1410px;width:2002px;height:70px;background:#ffffff"></div>
<svg style="position:absolute;left:8px;top:1428px;" width="34" height="32" viewBox="0 0 34 32"><circle cx="15.5" cy="15.6" r="13.7" fill="none" stroke="#222" stroke-width="2.5"/><path d="M11.2 12.2 C11.2 9.4 13.2 8 15.6 8 C18.2 8 19.9 9.7 19.9 11.9 C19.9 14.8 15.8 15 15.8 18.5" fill="none" stroke="#222" stroke-width="2.4" stroke-linecap="round"/><circle cx="15.8" cy="22.6" r="1.6" fill="#222"/></svg>
<svg style="position:absolute;left:46.3px;top:1426.3px;" width="35" height="35" viewBox="0 0 35 35"><path d="M28.08,13.83 L31.76,14.37 L31.76,20.63 L28.08,21.17 L27.58,22.39 L29.80,25.37 L25.37,29.80 L22.39,27.58 L21.17,28.08 L20.63,31.76 L14.37,31.76 L13.83,28.08 L12.61,27.58 L9.63,29.80 L5.20,25.37 L7.42,22.39 L6.92,21.17 L3.24,20.63 L3.24,14.37 L6.92,13.83 L7.42,12.61 L5.20,9.63 L9.63,5.20 L12.61,7.42 L13.83,6.92 L14.37,3.24 L20.63,3.24 L21.17,6.92 L22.39,7.42 L25.37,5.20 L29.80,9.63 L27.58,12.61Z" fill="none" stroke="#222" stroke-width="2.5" stroke-linejoin="round"/><circle cx="17.5" cy="17.5" r="5.0" fill="none" stroke="#222" stroke-width="2.5"/></svg>
<div style="position:absolute;left:88.4px;top:1426.4px;width:35px;height:35.3px;box-sizing:border-box;border:1px solid #dedede;border-radius:5px;background:#ececec"></div>
<svg style="position:absolute;left:88.4px;top:1426.4px;" width="35" height="35" viewBox="0 0 35 35"><g fill="none" stroke="#222" stroke-width="2.3" stroke-linecap="round" stroke-linejoin="round"><line x1="9" y1="17.5" x2="26.5" y2="17.5"/><polyline points="16,10.5 9,17.5 16,24.5"/></g></svg>
<div style="position:absolute;left:131.6px;top:1426.4px;width:35px;height:35.3px;box-sizing:border-box;border:1px solid #dedede;border-radius:5px;background:#ececec"></div>
<svg style="position:absolute;left:131.6px;top:1426.4px;" width="35" height="35" viewBox="0 0 35 35"><g fill="none" stroke="#222" stroke-width="2.3" stroke-linecap="round" stroke-linejoin="round"><line x1="8.5" y1="17.5" x2="26" y2="17.5"/><polyline points="19,10.5 26,17.5 19,24.5"/></g></svg>
<div style="position:absolute;left:182.6px;top:1427.4px;width:718.7px;height:34.3px;box-sizing:border-box;border:1.8px solid #c9c9c9;border-radius:6px;background:#fafafa"></div>
<div style="position:absolute;left:194.77px;top:1429.50px;height:31px;line-height:31px;font-size:19.5px;color:#3a3a3a;font-weight:normal;font-family:'Liberation Sans',sans-serif;white-space:pre;transform-origin:0 50%;transform:scaleX(0.9250);">Search</div>
<svg style="position:absolute;left:865.3000000000001px;top:1430px;" width="28" height="28" viewBox="0 0 28 28"><g fill="none" stroke="#222" stroke-width="2.2" stroke-linecap="round"><circle cx="17" cy="10.5" r="6.5"/><line x1="12.3" y1="15.2" x2="6.5" y2="21"/></g></svg>
<div style="position:absolute;left:936.80px;top:1429.50px;height:31px;line-height:31px;font-size:19.5px;color:#1f1f1f;font-weight:normal;font-family:'Liberation Sans',sans-serif;white-space:pre;transform-origin:0 50%;transform:scaleX(0.9220);">0高亮</div>
<svg style="position:absolute;left:1010px;top:1428px;" width="34" height="32" viewBox="0 0 34 32"><circle cx="15.5" cy="15.6" r="13.7" fill="none" stroke="#222" stroke-width="2.5"/><path d="M11.2 12.2 C11.2 9.4 13.2 8 15.6 8 C18.2 8 19.9 9.7 19.9 11.9 C19.9 14.8 15.8 15 15.8 18.5" fill="none" stroke="#222" stroke-width="2.4" stroke-linecap="round"/><circle cx="15.8" cy="22.6" r="1.6" fill="#222"/></svg>
<svg style="position:absolute;left:1048.3px;top:1426.3px;" width="35" height="35" viewBox="0 0 35 35"><path d="M28.08,13.83 L31.76,14.37 L31.76,20.63 L28.08,21.17 L27.58,22.39 L29.80,25.37 L25.37,29.80 L22.39,27.58 L21.17,28.08 L20.63,31.76 L14.37,31.76 L13.83,28.08 L12.61,27.58 L9.63,29.80 L5.20,25.37 L7.42,22.39 L6.92,21.17 L3.24,20.63 L3.24,14.37 L6.92,13.83 L7.42,12.61 L5.20,9.63 L9.63,5.20 L12.61,7.42 L13.83,6.92 L14.37,3.24 L20.63,3.24 L21.17,6.92 L22.39,7.42 L25.37,5.20 L29.80,9.63 L27.58,12.61Z" fill="none" stroke="#222" stroke-width="2.5" stroke-linejoin="round"/><circle cx="17.5" cy="17.5" r="5.0" fill="none" stroke="#222" stroke-width="2.5"/></svg>
<div style="position:absolute;left:1090.4px;top:1426.4px;width:35px;height:35.3px;box-sizing:border-box;border:1px solid #dedede;border-radius:5px;background:#ececec"></div>
<svg style="position:absolute;left:1090.4px;top:1426.4px;" width="35" height="35" viewBox="0 0 35 35"><g fill="none" stroke="#222" stroke-width="2.3" stroke-linecap="round" stroke-linejoin="round"><line x1="9" y1="17.5" x2="26.5" y2="17.5"/><polyline points="16,10.5 9,17.5 16,24.5"/></g></svg>
<div style="position:absolute;left:1133.6px;top:1426.4px;width:35px;height:35.3px;box-sizing:border-box;border:1px solid #dedede;border-radius:5px;background:#ececec"></div>
<svg style="position:absolute;left:1133.6px;top:1426.4px;" width="35" height="35" viewBox="0 0 35 35"><g fill="none" stroke="#222" stroke-width="2.3" stroke-linecap="round" stroke-linejoin="round"><line x1="8.5" y1="17.5" x2="26" y2="17.5"/><polyline points="19,10.5 26,17.5 19,24.5"/></g></svg>
<div style="position:absolute;left:1184.6px;top:1427.4px;width:719.1px;height:34.3px;box-sizing:border-box;border:1.8px solid #c9c9c9;border-radius:6px;background:#fafafa"></div>
<div style="position:absolute;left:1196.77px;top:1429.50px;height:31px;line-height:31px;font-size:19.5px;color:#3a3a3a;font-weight:normal;font-family:'Liberation Sans',sans-serif;white-space:pre;transform-origin:0 50%;transform:scaleX(0.9250);">Search</div>
<svg style="position:absolute;left:1867.6999999999998px;top:1430px;" width="28" height="28" viewBox="0 0 28 28"><g fill="none" stroke="#222" stroke-width="2.2" stroke-linecap="round"><circle cx="17" cy="10.5" r="6.5"/><line x1="12.3" y1="15.2" x2="6.5" y2="21"/></g></svg>
<div style="position:absolute;left:1938.40px;top:1429.50px;height:31px;line-height:31px;font-size:19.5px;color:#1f1f1f;font-weight:normal;font-family:'Liberation Sans',sans-serif;white-space:pre;transform-origin:0 50%;transform:scaleX(0.9220);">0高亮</div>
<div style="position:absolute;left:1000.3px;top:1409px;width:1.1px;height:71px;background:#e0e0e0"></div>
<div style="position:absolute;left:0px;top:1479.5px;width:2559px;height:1.3px;background:#dcdcdc"></div>
<div style="position:absolute;left:2003.3px;top:585px;width:505px;height:895px;background:#fafafa"></div>
<div style="position:absolute;left:2018.88px;top:597.00px;height:34px;line-height:34px;font-size:21.7px;color:#111;font-weight:bold;font-family:'Liberation Sans',sans-serif;white-space:pre;transform-origin:0 50%;transform:scaleX(1.0155);">Inspector</div>
<div style="position:absolute;left:2291.7px;top:599.6px;width:74.2px;height:28.2px;border-radius:6px;background:#dedede;overflow:hidden"><div style="position:absolute;left:37.3px;top:0;width:37px;height:100%;background:#2a64a0"></div></div>
<div style="position:absolute;left:2302.3px;top:607px;width:3px;height:12.5px;background:#222"></div>
<div style="position:absolute;left:2307.5px;top:607px;width:10.5px;height:12.5px;background:#222"></div>
<div style="position:absolute;left:2339.5px;top:607px;width:10.5px;height:12.5px;background:#fff"></div>
<div style="position:absolute;left:2352.3px;top:607px;width:3px;height:12.5px;background:#fff"></div>
<svg style="position:absolute;left:2382px;top:599px;" width="26" height="28" viewBox="0 0 26 28"><g fill="none" stroke="#222" stroke-width="2.2"><line x1="2.5" y1="3" x2="22.5" y2="3"/><line x1="2.5" y1="24.5" x2="22.5" y2="24.5"/></g><path d="M12.5 6.5 L8.5 11 H16.5 Z M12.5 21 L8.5 16.5 H16.5 Z" fill="#222"/></svg>
<svg style="position:absolute;left:2423px;top:599px;" width="26" height="28" viewBox="0 0 26 28"><g fill="none" stroke="#222" stroke-width="2.2"><line x1="3" y1="13.7" x2="23" y2="13.7"/></g><path d="M8.5 2.5 H17 L12.8 7 Z M8.5 25 H17 L12.8 20.5 Z" fill="#222"/></svg>
<svg style="position:absolute;left:2468px;top:602px;" width="22" height="22" viewBox="0 0 22 22"><g stroke="#222" stroke-width="2.4"><line x1="2.5" y1="2.8" x2="20" y2="20"/><line x1="20" y1="2.8" x2="2.5" y2="20"/></g></svg>
<div style="position:absolute;left:2003.3px;top:643px;width:505px;height:1.3px;background:#dedede"></div>
<div style="position:absolute;left:2019.90px;top:659.40px;height:31px;line-height:31px;font-size:19.5px;color:#1f1f1f;font-weight:normal;font-family:'Liberation Sans',sans-serif;white-space:pre;transform-origin:0 50%;transform:scaleX(0.8899);">请求属性</div>
<div style="position:absolute;left:2398px;top:659.4px;width:37px;height:27px;border-radius:13.5px;background:#ececec;text-align:center;line-height:27px;font-family:'Liberation Sans',sans-serif;font-size:20px;color:#222">2</div>
<svg style="position:absolute;left:2469px;top:664.9px;" width="20" height="14" viewBox="0 0 20 14"><polyline points="2.5,3 9.5,10 16.5,3" fill="none" stroke="#222" stroke-width="2.3" stroke-linejoin="round" stroke-linecap="round"/></svg>
<div style="position:absolute;left:2003.3px;top:701.6px;width:505px;height:1.3px;background:#dedede"></div>
<div style="position:absolute;left:2019.90px;top:718.00px;height:31px;line-height:31px;font-size:19.5px;color:#1f1f1f;font-weight:normal;font-family:'Liberation Sans',sans-serif;white-space:pre;transform-origin:0 50%;transform:scaleX(0.8941);">请求查询参数</div>
<div style="position:absolute;left:2386px;top:718.0px;width:49px;height:27px;border-radius:13.5px;background:#ececec;text-align:center;line-height:27px;font-family:'Liberation Sans',sans-serif;font-size:20px;color:#222">16</div>
<svg style="position:absolute;left:2469px;top:723.5px;" width="20" height="14" viewBox="0 0 20 14"><polyline points="2.5,3 9.5,10 16.5,3" fill="none" stroke="#222" stroke-width="2.3" stroke-linejoin="round" stroke-linecap="round"/></svg>
<div style="position:absolute;left:2003.3px;top:760.2px;width:505px;height:1.3px;background:#dedede"></div>
<div style="position:absolute;left:2019.90px;top:776.60px;height:31px;line-height:31px;font-size:19.5px;color:#1f1f1f;font-weight:normal;font-family:'Liberation Sans',sans-serif;white-space:pre;transform-origin:0 50%;transform:scaleX(0.8864);">请求头</div>
<div style="position:absolute;left:2386px;top:776.6px;width:49px;height:27px;border-radius:13.5px;background:#ececec;text-align:center;line-height:27px;font-family:'Liberation Sans',sans-serif;font-size:20px;color:#222">15</div>
<svg style="position:absolute;left:2469px;top:782.1px;" width="20" height="14" viewBox="0 0 20 14"><polyline points="2.5,3 9.5,10 16.5,3" fill="none" stroke="#222" stroke-width="2.3" stroke-linejoin="round" stroke-linecap="round"/></svg>
<div style="position:absolute;left:2003.3px;top:818.8000000000001px;width:505px;height:1.3px;background:#dedede"></div>
<div style="position:absolute;left:2019.00px;top:835.20px;height:31px;line-height:31px;font-size:19.5px;color:#1f1f1f;font-weight:normal;font-family:'Liberation Sans',sans-serif;white-space:pre;transform-origin:0 50%;transform:scaleX(0.9017);">响应头</div>
<div style="position:absolute;left:2398px;top:835.2px;width:37px;height:27px;border-radius:13.5px;background:#ececec;text-align:center;line-height:27px;font-family:'Liberation Sans',sans-serif;font-size:20px;color:#222">6</div>
<svg style="position:absolute;left:2469px;top:840.7px;" width="20" height="14" viewBox="0 0 20 14"><polyline points="2.5,3 9.5,10 16.5,3" fill="none" stroke="#222" stroke-width="2.3" stroke-linejoin="round" stroke-linecap="round"/></svg>
<div style="position:absolute;left:2003.3px;top:877.4000000000001px;width:505px;height:1.3px;background:#dedede"></div>
<div style="position:absolute;left:2508.5px;top:585px;width:50.5px;height:895px;background:#fafafa"></div>
<div style="position:absolute;left:2508.3px;top:585px;width:1.6px;height:895px;background:#d8d8d8"></div>
<div style="position:absolute;left:2510px;top:585.6px;width:49px;height:203px;background:#c9daf0"></div>
<svg style="position:absolute;left:2518px;top:604px;" width="32" height="32" viewBox="0 0 32 32"><g fill="none" stroke="#222" stroke-width="1.9" stroke-linecap="round"><line x1="5.8" y1="14.9" x2="27.2" y2="14.9"/><path d="M9.3 14.9 C9.3 10 9.8 7.7 12.3 7.7 H22.3 C24.8 7.7 25.3 10 25.3 14.9"/><circle cx="11.3" cy="22.2" r="3.3"/><circle cx="21.7" cy="22.2" r="3.3"/><line x1="14.6" y1="22.2" x2="18.4" y2="22.2"/></g></svg>
<div style="position:absolute;left:2532px;top:704.6px;width:0;height:0"><div style="position:absolute;left:-60px;top:-14px;width:120px;height:28px;line-height:28px;text-align:center;font-family:'Liberation Sans',sans-serif;font-size:20px;color:#111;transform:rotate(90deg) scaleX(1.15);white-space:pre">Inspector</div></div>
<svg style="position:absolute;left:2521px;top:811px;" width="28" height="30" viewBox="0 0 28 30"><g fill="none" stroke="#222" stroke-width="2.2" stroke-linejoin="round"><path d="M6 3.5 H16 L23 10.5 V24.5 C23 25.5 22.3 26.2 21.3 26.2 H7.5 C6.5 26.2 5.8 25.5 5.8 24.5 V5 C5.8 4 6.5 3.5 7.5 3.5 Z"/><line x1="10" y1="16" x2="19" y2="16"/><line x1="10" y1="21" x2="19" y2="21"/><line x1="10" y1="11" x2="13" y2="11"/></g></svg>
<div style="position:absolute;left:2534px;top:882px;width:0;height:0"><div style="position:absolute;left:-40px;top:-14px;width:80px;height:28px;line-height:28px;text-align:center;font-family:'Liberation Sans',sans-serif;font-size:21px;color:#111;transform:rotate(90deg);white-space:pre">说明</div></div>
<div style="position:absolute;left:2510px;top:942px;width:49px;height:1.3px;background:#dcdcdc"></div>
<div style="position:absolute;left:2510px;top:1421px;width:49px;height:1.3px;background:#dcdcdc"></div>
<svg style="position:absolute;left:2519.3px;top:1436.5px;" width="30" height="30" viewBox="0 0 30 30"><path d="M23.88,11.92 L27.01,12.36 L27.01,17.64 L23.88,18.08 L23.46,19.10 L25.36,21.63 L21.63,25.36 L19.10,23.46 L18.08,23.88 L17.64,27.01 L12.36,27.01 L11.92,23.88 L10.90,23.46 L8.37,25.36 L4.64,21.63 L6.54,19.10 L6.12,18.08 L2.99,17.64 L2.99,12.36 L6.12,11.92 L6.54,10.90 L4.64,8.37 L8.37,4.64 L10.90,6.54 L11.92,6.12 L12.36,2.99 L17.64,2.99 L18.08,6.12 L19.10,6.54 L21.63,4.64 L25.36,8.37 L23.46,10.90Z" fill="none" stroke="#222" stroke-width="2.2" stroke-linejoin="round"/><circle cx="15.0" cy="15.0" r="4.2" fill="none" stroke="#222" stroke-width="2.2"/></svg>
<div style="position:absolute;left:2474.3px;top:1071.5px;width:75.6px;height:75.6px;border-radius:50%;background:radial-gradient(circle at 50% 50%, #eef2fc 0%, #e5ebfb 66%, #cddafc 80%, #b9cdfb 100%);box-shadow:0 1px 3px rgba(0,0,0,0.12)"></div>
<svg style="position:absolute;left:2496px;top:1088px;" width="32" height="48" viewBox="0 0 32 48"><defs><linearGradient id="ub" x1="0" y1="0" x2="0.4" y2="1"><stop offset="0" stop-color="#7f9dfd"/><stop offset="1" stop-color="#4d74f7"/></linearGradient><linearGradient id="uc" x1="0" y1="0" x2="0" y2="1"><stop offset="0" stop-color="#d9d9dc"/><stop offset="1" stop-color="#a9a9ae"/></linearGradient></defs><rect x="7" y="2" width="18" height="10" fill="url(#uc)"/><rect x="10.5" y="6.5" width="2" height="2" fill="#444"/><rect x="17" y="6.5" width="2.5" height="2" fill="#444"/><path d="M2.4 11.4 H29.7 V31 A13.65 13.65 0 0 1 2.4 31 Z" fill="url(#ub)"/></svg>
<div style="position:absolute;left:0px;top:1480.8px;width:2559px;height:52.2px;background:#f9f9f9"></div>
<div style="position:absolute;left:22.20px;top:1496.50px;height:31px;line-height:31px;font-size:19.5px;color:#1f1f1f;font-weight:normal;font-family:'Liberation Sans',sans-serif;white-space:pre;transform-origin:0 50%;transform:scaleX(0.9157);">事件日志 (4)</div>
<div style="position:absolute;left:127px;top:1499.5px;width:9px;height:9px;border-radius:50%;background:#2a64a0"></div>
<div style="position:absolute;left:167.56px;top:1496.50px;height:31px;line-height:31px;font-size:19.5px;color:#1f1f1f;font-weight:normal;font-family:'Liberation Sans',sans-serif;white-space:pre;transform-origin:0 50%;transform:scaleX(0.9380);">所有问题 (129)</div>
<div style="position:absolute;left:293.6px;top:1499.5px;width:9px;height:9px;border-radius:50%;background:#2a64a0"></div>
<svg style="position:absolute;left:2016px;top:1501px;" width="24" height="24" viewBox="0 0 24 24"><circle cx="12" cy="11.5" r="10" fill="none" stroke="#222" stroke-width="2"/><line x1="12" y1="9.5" x2="12" y2="16.5" stroke="#222" stroke-width="2.2"/><circle cx="12" cy="6.3" r="1.4" fill="#222"/></svg>
<div style="position:absolute;left:2054.78px;top:1496.50px;height:31px;line-height:31px;font-size:19.5px;color:#1f1f1f;font-weight:normal;font-family:'Liberation Sans',sans-serif;white-space:pre;transform-origin:0 50%;transform:scaleX(0.9190);">内存: 已用:226.8MB 共计:6.93GB</div>
<div style="position:absolute;left:2346.7px;top:1505.6px;width:72px;height:9.2px;border-radius:5px;background:#e2e2e2"></div>
<div style="position:absolute;left:2452.4px;top:1498px;width:84.2px;height:28.4px;box-sizing:border-box;border:1px solid #dcdcdc;border-radius:5px;background:#f4f4f4"></div>
<div style="position:absolute;left:2491.6px;top:1498px;width:1px;height:28.4px;background:#dcdcdc"></div>
<svg style="position:absolute;left:2456px;top:1498px;" width="34" height="30" viewBox="0 0 34 30"><path d="M17.7 9.5 Q18.7 16.3 24.5 17.7 Q18.7 19 17.7 25.8 Q16.7 19 10.9 17.7 Q16.7 16.3 17.7 9.5 Z" fill="#4a3fbd"/><path d="M10 5.5 Q10.6 9.6 14 10.8 Q10.6 11.9 10 16 Q9.4 11.9 6 10.8 Q9.4 9.6 10 5.5 Z" fill="#4a3fbd"/><path d="M22.3 3 Q22.7 6.6 25.6 7.8 Q22.7 8.9 22.3 12.4 Q21.9 8.9 19 7.8 Q21.9 6.6 22.3 3 Z" fill="#4a3fbd"/></svg>
<svg style="position:absolute;left:2502px;top:1503px;" width="24" height="18" viewBox="0 0 24 18"><polyline points="4,5 12,13 20,5" fill="none" stroke="#222" stroke-width="2.2"/></svg>
<div style="position:absolute;left:2210.94px;top:1455.00px;height:70px;line-height:70px;font-size:48px;color:rgba(222,222,222,0.75);font-weight:normal;font-family:'Liberation Sans',sans-serif;white-space:pre;transform-origin:0 50%;transform:scaleX(0.9822);-webkit-text-stroke:0.9px rgba(190,190,190,0.85);">CSDN @路baby</div>
</body></html>
